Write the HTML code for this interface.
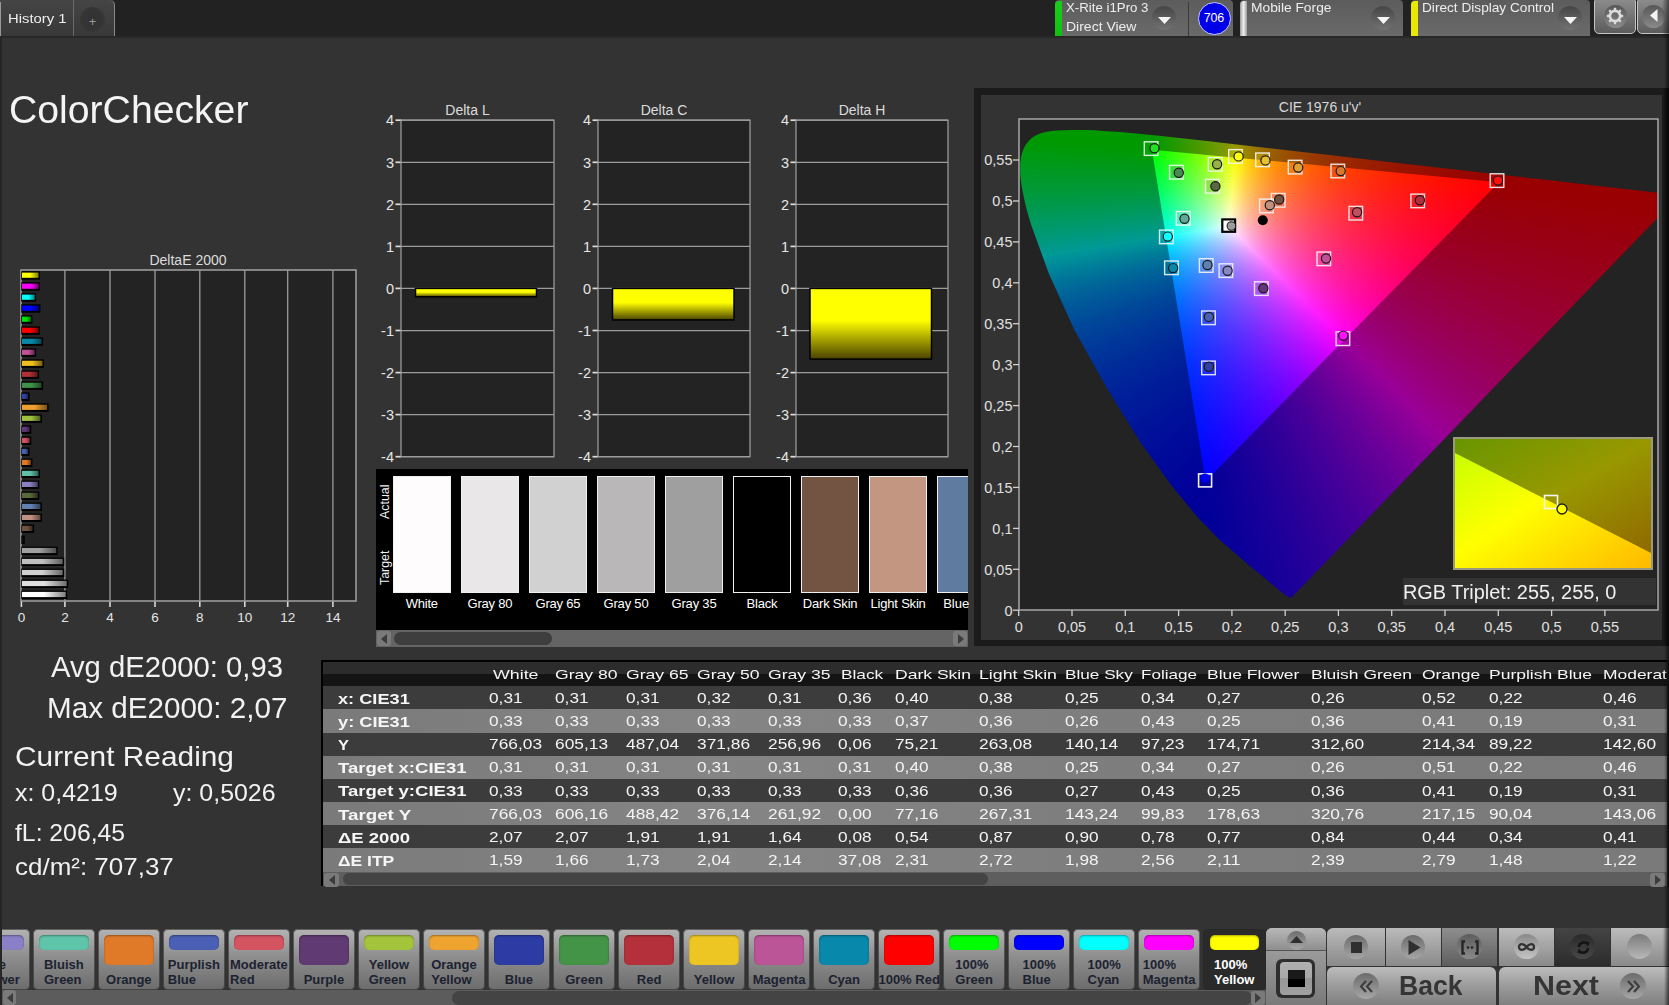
<!DOCTYPE html>
<html><head><meta charset="utf-8"><title>ColorChecker</title>
<style>
*{margin:0;padding:0;box-sizing:border-box}
html,body{width:1669px;height:1005px;overflow:hidden;background:#333333;font-family:"Liberation Sans", sans-serif;color:#ebebeb}
.a{position:absolute}
.t{position:absolute;white-space:nowrap;line-height:1}
</style></head><body>
<div class="a" style="left:0;top:0;width:1669px;height:1005px;background:#333333;overflow:hidden">

<div class="a" style="left:0;top:0;width:1669px;height:37px;background:#222222"></div>
<div class="a" style="left:0;top:36px;width:1669px;height:2px;background:#282828"></div>
<div class="a" style="left:0;top:0;width:115px;height:36px;background:linear-gradient(#454545,#383838);border-radius:0 5px 0 0;border-right:1px solid #8a8a8a"></div>
<div class="a" style="left:0;top:2px;width:1px;height:34px;background:#9a9a9a"></div>
<div class="a" style="left:73px;top:0;width:1px;height:36px;background:#6a6a6a"></div>
<div class="t" style="left:7.80px;top:12.20px;font-size:13.60px;color:#eeeeee;transform:scaleX(1.0922);transform-origin:0 0;">History 1</div>
<div class="a" style="left:80px;top:7px;width:25px;height:25px;border-radius:50%;background:radial-gradient(#333 40%,#3a3a3a)"></div>
<div class="t" style="left:82.5px;top:14.5px;width:20px;text-align:center;font-size:13px;color:#9a9a9a">+</div>
<div class="a" style="left:1055px;top:0;width:178px;height:36px;background:linear-gradient(#5c5c5c,#6a6a6a);border-radius:4px 4px 0 0"></div>
<div class="a" style="left:1055px;top:1px;width:7px;height:35px;background:linear-gradient(#18d018,#10c010);border-radius:4px 0 0 0"></div>
<div class="t" style="left:1065.60px;top:1.96px;font-size:12.60px;color:#eeeeee;transform:scaleX(1.0519);transform-origin:0 0;">X-Rite i1Pro 3</div>
<div class="t" style="left:1065.60px;top:21.16px;font-size:12.60px;color:#eeeeee;transform:scaleX(1.1105);transform-origin:0 0;">Direct View</div>
<div class="a" style="left:1152px;top:6px;width:24px;height:24px;border-radius:50%;background:linear-gradient(#464646,#727272)"></div>
<svg class="a" style="left:1157.5px;top:16.5px" width="13" height="8"><path d="M0 0 L13 0 L6.5 7 Z" fill="#f6f6f6"/></svg>
<div class="a" style="left:1188px;top:2px;width:1px;height:34px;background:#3a3a3a"></div>
<div class="a" style="left:1198px;top:2px;width:33px;height:33px;border-radius:50%;background:#0000e8;border:1.5px solid #c8c8ff"></div>
<div class="t" style="left:1194px;top:12px;width:40px;text-align:center;font-size:12.5px;color:#ffffff;letter-spacing:-0.2px">706</div>
<div class="a" style="left:1240px;top:0;width:163px;height:36px;background:linear-gradient(#5c5c5c,#6a6a6a);border-radius:4px 4px 0 0"></div>
<div class="a" style="left:1240px;top:1px;width:7px;height:35px;background:linear-gradient(90deg,#9a9a9a,#f0f0f0 50%,#9a9a9a);border-radius:4px 0 0 0"></div>
<div class="t" style="left:1250.60px;top:1.96px;font-size:12.60px;color:#eeeeee;transform:scaleX(1.0948);transform-origin:0 0;">Mobile Forge</div>
<div class="a" style="left:1371px;top:6px;width:24px;height:24px;border-radius:50%;background:linear-gradient(#464646,#727272)"></div>
<svg class="a" style="left:1376.5px;top:16.5px" width="13" height="8"><path d="M0 0 L13 0 L6.5 7 Z" fill="#f6f6f6"/></svg>
<div class="a" style="left:1411px;top:0;width:179px;height:36px;background:linear-gradient(#5c5c5c,#6a6a6a);border-radius:4px 4px 0 0"></div>
<div class="a" style="left:1411px;top:1px;width:7px;height:35px;background:#e8e800;border-radius:4px 0 0 0"></div>
<div class="t" style="left:1421.60px;top:1.96px;font-size:12.60px;color:#eeeeee;transform:scaleX(1.0835);transform-origin:0 0;">Direct Display Control</div>
<div class="a" style="left:1558px;top:6px;width:24px;height:24px;border-radius:50%;background:linear-gradient(#464646,#727272)"></div>
<svg class="a" style="left:1563.5px;top:16.5px" width="13" height="8"><path d="M0 0 L13 0 L6.5 7 Z" fill="#f6f6f6"/></svg>
<div class="a" style="left:1594px;top:-3px;width:42px;height:37px;background:linear-gradient(#8e8e8e,#5c5c5c);border:1.2px solid #c4c4c4;border-radius:5px"></div>
<div class="a" style="left:1603.6px;top:5px;width:23.2px;height:23.2px;border-radius:50%;background:linear-gradient(#575757,#8a8a8a)"></div>
<svg class="a" style="left:1605.2px;top:6.2px" width="20" height="20" viewBox="-10 -10 20 20"><g fill="none" stroke="#dcdcdc">
<circle r="5.1" stroke-width="2.6"/></g><g fill="#dcdcdc"><rect x="-1.2" y="-8.2" width="2.4" height="3.6" rx="0.6" transform="rotate(0)"/><rect x="-1.2" y="-8.2" width="2.4" height="3.6" rx="0.6" transform="rotate(45)"/><rect x="-1.2" y="-8.2" width="2.4" height="3.6" rx="0.6" transform="rotate(90)"/><rect x="-1.2" y="-8.2" width="2.4" height="3.6" rx="0.6" transform="rotate(135)"/><rect x="-1.2" y="-8.2" width="2.4" height="3.6" rx="0.6" transform="rotate(180)"/><rect x="-1.2" y="-8.2" width="2.4" height="3.6" rx="0.6" transform="rotate(225)"/><rect x="-1.2" y="-8.2" width="2.4" height="3.6" rx="0.6" transform="rotate(270)"/><rect x="-1.2" y="-8.2" width="2.4" height="3.6" rx="0.6" transform="rotate(315)"/>
</g></svg>
<div class="a" style="left:1637px;top:-3px;width:40px;height:37px;background:linear-gradient(#8e8e8e,#5c5c5c);border:1.2px solid #c4c4c4;border-radius:5px"></div>
<div class="a" style="left:1641.8px;top:5px;width:23.2px;height:23.2px;border-radius:50%;background:linear-gradient(#575757,#8a8a8a)"></div>
<svg class="a" style="left:1649px;top:9px" width="9" height="14"><path d="M8.5 0 L8.5 13 L1 6.5 Z" fill="#f4f4f4"/></svg>
<div class="a" style="left:1662px;top:0;width:7px;height:37px;background:linear-gradient(90deg,rgba(0,0,0,0),rgba(0,0,0,0.5))"></div>
<div class="t" style="left:9.00px;top:91.61px;font-size:37.90px;color:#f4f4f4;transform:scaleX(1.0337);transform-origin:0 0;">ColorChecker</div>
<div class="t" style="left:51.00px;top:652.76px;font-size:29.00px;color:#f2f2f2;transform:scaleX(1.0086);transform-origin:0 0;">Avg dE2000: 0,93</div>
<div class="t" style="left:47.30px;top:693.90px;font-size:28.60px;color:#f2f2f2;transform:scaleX(1.0361);transform-origin:0 0;">Max dE2000: 2,07</div>
<div class="t" style="left:15.00px;top:742.51px;font-size:27.90px;color:#f2f2f2;transform:scaleX(1.0699);transform-origin:0 0;">Current Reading</div>
<div class="t" style="left:15.20px;top:781.16px;font-size:24.00px;color:#f2f2f2;transform:scaleX(1.0402);transform-origin:0 0;">x: 0,4219</div>
<div class="t" style="left:172.60px;top:781.16px;font-size:24.00px;color:#f2f2f2;transform:scaleX(1.0392);transform-origin:0 0;">y: 0,5026</div>
<div class="t" style="left:15.20px;top:821.36px;font-size:24.00px;color:#f2f2f2;transform:scaleX(1.0305);transform-origin:0 0;">fL: 206,45</div>
<div class="t" style="left:15.20px;top:855.26px;font-size:24.00px;color:#f2f2f2;transform:scaleX(1.0823);transform-origin:0 0;">cd/m²: 707,37</div>
<div class="t" style="left:143px;top:252.5px;width:90px;text-align:center;font-size:14px;color:#dcdcdc">DeltaE 2000</div>
<svg class="a" style="left:0;top:0" width="370" height="640"><defs><linearGradient id="bg0" x1="0" y1="0" x2="1" y2="0"><stop offset="0" stop-color="#ffff00"/><stop offset="0.5" stop-color="#ffff00"/><stop offset="1" stop-color="#7f7f00"/></linearGradient><linearGradient id="bg1" x1="0" y1="0" x2="1" y2="0"><stop offset="0" stop-color="#ff00ff"/><stop offset="0.5" stop-color="#ff00ff"/><stop offset="1" stop-color="#7f007f"/></linearGradient><linearGradient id="bg2" x1="0" y1="0" x2="1" y2="0"><stop offset="0" stop-color="#00ffff"/><stop offset="0.5" stop-color="#00ffff"/><stop offset="1" stop-color="#007f7f"/></linearGradient><linearGradient id="bg3" x1="0" y1="0" x2="1" y2="0"><stop offset="0" stop-color="#0000ff"/><stop offset="0.5" stop-color="#0000ff"/><stop offset="1" stop-color="#00007f"/></linearGradient><linearGradient id="bg4" x1="0" y1="0" x2="1" y2="0"><stop offset="0" stop-color="#00e000"/><stop offset="0.5" stop-color="#00e000"/><stop offset="1" stop-color="#007000"/></linearGradient><linearGradient id="bg5" x1="0" y1="0" x2="1" y2="0"><stop offset="0" stop-color="#ff0000"/><stop offset="0.5" stop-color="#ff0000"/><stop offset="1" stop-color="#7f0000"/></linearGradient><linearGradient id="bg6" x1="0" y1="0" x2="1" y2="0"><stop offset="0" stop-color="#0a88a8"/><stop offset="0.5" stop-color="#0a88a8"/><stop offset="1" stop-color="#054454"/></linearGradient><linearGradient id="bg7" x1="0" y1="0" x2="1" y2="0"><stop offset="0" stop-color="#c05098"/><stop offset="0.5" stop-color="#c05098"/><stop offset="1" stop-color="#60284c"/></linearGradient><linearGradient id="bg8" x1="0" y1="0" x2="1" y2="0"><stop offset="0" stop-color="#f0c020"/><stop offset="0.5" stop-color="#f0c020"/><stop offset="1" stop-color="#786010"/></linearGradient><linearGradient id="bg9" x1="0" y1="0" x2="1" y2="0"><stop offset="0" stop-color="#b03038"/><stop offset="0.5" stop-color="#b03038"/><stop offset="1" stop-color="#58181c"/></linearGradient><linearGradient id="bg10" x1="0" y1="0" x2="1" y2="0"><stop offset="0" stop-color="#409048"/><stop offset="0.5" stop-color="#409048"/><stop offset="1" stop-color="#204824"/></linearGradient><linearGradient id="bg11" x1="0" y1="0" x2="1" y2="0"><stop offset="0" stop-color="#3040a0"/><stop offset="0.5" stop-color="#3040a0"/><stop offset="1" stop-color="#182050"/></linearGradient><linearGradient id="bg12" x1="0" y1="0" x2="1" y2="0"><stop offset="0" stop-color="#f0a030"/><stop offset="0.5" stop-color="#f0a030"/><stop offset="1" stop-color="#785018"/></linearGradient><linearGradient id="bg13" x1="0" y1="0" x2="1" y2="0"><stop offset="0" stop-color="#a0c040"/><stop offset="0.5" stop-color="#a0c040"/><stop offset="1" stop-color="#506020"/></linearGradient><linearGradient id="bg14" x1="0" y1="0" x2="1" y2="0"><stop offset="0" stop-color="#603878"/><stop offset="0.5" stop-color="#603878"/><stop offset="1" stop-color="#301c3c"/></linearGradient><linearGradient id="bg15" x1="0" y1="0" x2="1" y2="0"><stop offset="0" stop-color="#d05060"/><stop offset="0.5" stop-color="#d05060"/><stop offset="1" stop-color="#682830"/></linearGradient><linearGradient id="bg16" x1="0" y1="0" x2="1" y2="0"><stop offset="0" stop-color="#4860b0"/><stop offset="0.5" stop-color="#4860b0"/><stop offset="1" stop-color="#243058"/></linearGradient><linearGradient id="bg17" x1="0" y1="0" x2="1" y2="0"><stop offset="0" stop-color="#e07828"/><stop offset="0.5" stop-color="#e07828"/><stop offset="1" stop-color="#703c14"/></linearGradient><linearGradient id="bg18" x1="0" y1="0" x2="1" y2="0"><stop offset="0" stop-color="#60c0a8"/><stop offset="0.5" stop-color="#60c0a8"/><stop offset="1" stop-color="#306054"/></linearGradient><linearGradient id="bg19" x1="0" y1="0" x2="1" y2="0"><stop offset="0" stop-color="#8880c0"/><stop offset="0.5" stop-color="#8880c0"/><stop offset="1" stop-color="#444060"/></linearGradient><linearGradient id="bg20" x1="0" y1="0" x2="1" y2="0"><stop offset="0" stop-color="#586838"/><stop offset="0.5" stop-color="#586838"/><stop offset="1" stop-color="#2c341c"/></linearGradient><linearGradient id="bg21" x1="0" y1="0" x2="1" y2="0"><stop offset="0" stop-color="#6080b0"/><stop offset="0.5" stop-color="#6080b0"/><stop offset="1" stop-color="#304058"/></linearGradient><linearGradient id="bg22" x1="0" y1="0" x2="1" y2="0"><stop offset="0" stop-color="#c09080"/><stop offset="0.5" stop-color="#c09080"/><stop offset="1" stop-color="#604840"/></linearGradient><linearGradient id="bg23" x1="0" y1="0" x2="1" y2="0"><stop offset="0" stop-color="#705040"/><stop offset="0.5" stop-color="#705040"/><stop offset="1" stop-color="#382820"/></linearGradient><linearGradient id="bg24" x1="0" y1="0" x2="1" y2="0"><stop offset="0" stop-color="#101010"/><stop offset="0.5" stop-color="#101010"/><stop offset="1" stop-color="#080808"/></linearGradient><linearGradient id="bg25" x1="0" y1="0" x2="1" y2="0"><stop offset="0" stop-color="#a0a0a0"/><stop offset="0.5" stop-color="#a0a0a0"/><stop offset="1" stop-color="#505050"/></linearGradient><linearGradient id="bg26" x1="0" y1="0" x2="1" y2="0"><stop offset="0" stop-color="#c0c0c0"/><stop offset="0.5" stop-color="#c0c0c0"/><stop offset="1" stop-color="#606060"/></linearGradient><linearGradient id="bg27" x1="0" y1="0" x2="1" y2="0"><stop offset="0" stop-color="#d0d0d0"/><stop offset="0.5" stop-color="#d0d0d0"/><stop offset="1" stop-color="#686868"/></linearGradient><linearGradient id="bg28" x1="0" y1="0" x2="1" y2="0"><stop offset="0" stop-color="#e0e0e0"/><stop offset="0.5" stop-color="#e0e0e0"/><stop offset="1" stop-color="#707070"/></linearGradient><linearGradient id="bg29" x1="0" y1="0" x2="1" y2="0"><stop offset="0" stop-color="#ffffff"/><stop offset="0.5" stop-color="#ffffff"/><stop offset="1" stop-color="#7f7f7f"/></linearGradient></defs><rect x="21" y="270" width="335" height="331" fill="#232323"/><line x1="21.4" y1="601" x2="21.4" y2="607" stroke="#d8d8d8" stroke-width="1.6"/><line x1="64.9" y1="270" x2="64.9" y2="601" stroke="#9c9c9c" stroke-width="1.3"/><line x1="64.9" y1="601" x2="64.9" y2="607" stroke="#d8d8d8" stroke-width="1.6"/><line x1="110.0" y1="270" x2="110.0" y2="601" stroke="#9c9c9c" stroke-width="1.3"/><line x1="110.0" y1="601" x2="110.0" y2="607" stroke="#d8d8d8" stroke-width="1.6"/><line x1="155.0" y1="270" x2="155.0" y2="601" stroke="#9c9c9c" stroke-width="1.3"/><line x1="155.0" y1="601" x2="155.0" y2="607" stroke="#d8d8d8" stroke-width="1.6"/><line x1="199.8" y1="270" x2="199.8" y2="601" stroke="#9c9c9c" stroke-width="1.3"/><line x1="199.8" y1="601" x2="199.8" y2="607" stroke="#d8d8d8" stroke-width="1.6"/><line x1="244.8" y1="270" x2="244.8" y2="601" stroke="#9c9c9c" stroke-width="1.3"/><line x1="244.8" y1="601" x2="244.8" y2="607" stroke="#d8d8d8" stroke-width="1.6"/><line x1="287.7" y1="270" x2="287.7" y2="601" stroke="#9c9c9c" stroke-width="1.3"/><line x1="287.7" y1="601" x2="287.7" y2="607" stroke="#d8d8d8" stroke-width="1.6"/><line x1="332.9" y1="270" x2="332.9" y2="601" stroke="#9c9c9c" stroke-width="1.3"/><line x1="332.9" y1="601" x2="332.9" y2="607" stroke="#d8d8d8" stroke-width="1.6"/><rect x="21" y="270" width="335" height="331" fill="none" stroke="#9c9c9c" stroke-width="1.6"/><rect x="21.3" y="271.3" width="18.7" height="8.4" fill="#000"/><rect x="22.0" y="272.6" width="16.5" height="5.2" fill="url(#bg0)"/><rect x="21.3" y="282.3" width="18.7" height="8.4" fill="#000"/><rect x="22.0" y="283.6" width="16.5" height="5.2" fill="url(#bg1)"/><rect x="21.3" y="293.3" width="14.9" height="8.4" fill="#000"/><rect x="22.0" y="294.6" width="12.7" height="5.2" fill="url(#bg2)"/><rect x="21.3" y="304.3" width="19.1" height="8.4" fill="#000"/><rect x="22.0" y="305.6" width="16.9" height="5.2" fill="url(#bg3)"/><rect x="21.3" y="315.3" width="11.1" height="8.4" fill="#000"/><rect x="22.0" y="316.6" width="8.9" height="5.2" fill="url(#bg4)"/><rect x="21.3" y="326.4" width="18.7" height="8.4" fill="#000"/><rect x="22.0" y="327.7" width="16.5" height="5.2" fill="url(#bg5)"/><rect x="21.3" y="337.4" width="21.8" height="8.4" fill="#000"/><rect x="22.0" y="338.7" width="19.6" height="5.2" fill="url(#bg6)"/><rect x="21.3" y="348.4" width="14.9" height="8.4" fill="#000"/><rect x="22.0" y="349.7" width="12.7" height="5.2" fill="url(#bg7)"/><rect x="21.3" y="359.4" width="22.7" height="8.4" fill="#000"/><rect x="22.0" y="360.7" width="20.5" height="5.2" fill="url(#bg8)"/><rect x="21.3" y="370.4" width="17.8" height="8.4" fill="#000"/><rect x="22.0" y="371.7" width="15.6" height="5.2" fill="url(#bg9)"/><rect x="21.3" y="381.4" width="21.8" height="8.4" fill="#000"/><rect x="22.0" y="382.7" width="19.6" height="5.2" fill="url(#bg10)"/><rect x="21.3" y="392.4" width="8.3" height="8.4" fill="#000"/><rect x="22.0" y="393.7" width="6.1" height="5.2" fill="url(#bg11)"/><rect x="21.3" y="403.4" width="27.3" height="8.4" fill="#000"/><rect x="22.0" y="404.7" width="25.1" height="5.2" fill="url(#bg12)"/><rect x="21.3" y="414.4" width="20.6" height="8.4" fill="#000"/><rect x="22.0" y="415.7" width="18.4" height="5.2" fill="url(#bg13)"/><rect x="21.3" y="425.4" width="10.0" height="8.4" fill="#000"/><rect x="22.0" y="426.7" width="7.8" height="5.2" fill="url(#bg14)"/><rect x="21.3" y="436.4" width="10.0" height="8.4" fill="#000"/><rect x="22.0" y="437.8" width="7.8" height="5.2" fill="url(#bg15)"/><rect x="21.3" y="447.5" width="8.3" height="8.4" fill="#000"/><rect x="22.0" y="448.8" width="6.1" height="5.2" fill="url(#bg16)"/><rect x="21.3" y="458.5" width="11.1" height="8.4" fill="#000"/><rect x="22.0" y="459.8" width="8.9" height="5.2" fill="url(#bg17)"/><rect x="21.3" y="469.5" width="18.7" height="8.4" fill="#000"/><rect x="22.0" y="470.8" width="16.5" height="5.2" fill="url(#bg18)"/><rect x="21.3" y="480.5" width="18.0" height="8.4" fill="#000"/><rect x="22.0" y="481.8" width="15.8" height="5.2" fill="url(#bg19)"/><rect x="21.3" y="491.5" width="18.0" height="8.4" fill="#000"/><rect x="22.0" y="492.8" width="15.8" height="5.2" fill="url(#bg20)"/><rect x="21.3" y="502.5" width="20.6" height="8.4" fill="#000"/><rect x="22.0" y="503.8" width="18.4" height="5.2" fill="url(#bg21)"/><rect x="21.3" y="513.5" width="20.6" height="8.4" fill="#000"/><rect x="22.0" y="514.8" width="18.4" height="5.2" fill="url(#bg22)"/><rect x="21.3" y="524.5" width="12.8" height="8.4" fill="#000"/><rect x="22.0" y="525.8" width="10.6" height="5.2" fill="url(#bg23)"/><rect x="21.3" y="535.5" width="3.5" height="8.4" fill="#000"/><rect x="22.0" y="536.8" width="1.3" height="5.2" fill="url(#bg24)"/><rect x="21.3" y="546.6" width="36.4" height="8.4" fill="#000"/><rect x="22.0" y="547.9" width="34.2" height="5.2" fill="url(#bg25)"/><rect x="21.3" y="557.6" width="42.9" height="8.4" fill="#000"/><rect x="22.0" y="558.9" width="40.7" height="5.2" fill="url(#bg26)"/><rect x="21.3" y="568.6" width="42.9" height="8.4" fill="#000"/><rect x="22.0" y="569.9" width="40.7" height="5.2" fill="url(#bg27)"/><rect x="21.3" y="579.6" width="46.9" height="8.4" fill="#000"/><rect x="22.0" y="580.9" width="44.7" height="5.2" fill="url(#bg28)"/><rect x="21.3" y="590.6" width="45.9" height="8.4" fill="#000"/><rect x="22.0" y="591.9" width="43.7" height="5.2" fill="url(#bg29)"/></svg>
<div class="t" style="left:6.4px;top:610.8px;width:30px;text-align:center;font-size:13.5px;color:#e6e6e6">0</div>
<div class="t" style="left:49.9px;top:610.8px;width:30px;text-align:center;font-size:13.5px;color:#e6e6e6">2</div>
<div class="t" style="left:95.0px;top:610.8px;width:30px;text-align:center;font-size:13.5px;color:#e6e6e6">4</div>
<div class="t" style="left:140.0px;top:610.8px;width:30px;text-align:center;font-size:13.5px;color:#e6e6e6">6</div>
<div class="t" style="left:184.8px;top:610.8px;width:30px;text-align:center;font-size:13.5px;color:#e6e6e6">8</div>
<div class="t" style="left:229.8px;top:610.8px;width:30px;text-align:center;font-size:13.5px;color:#e6e6e6">10</div>
<div class="t" style="left:272.7px;top:610.8px;width:30px;text-align:center;font-size:13.5px;color:#e6e6e6">12</div>
<div class="t" style="left:317.9px;top:610.8px;width:30px;text-align:center;font-size:13.5px;color:#e6e6e6">14</div>
<svg class="a" style="left:381px;top:100px" width="183" height="370"><defs><linearGradient id="yg401" x1="0" y1="0" x2="0" y2="1"><stop offset="0" stop-color="#ffff00"/><stop offset="0.45" stop-color="#ffff00"/><stop offset="1" stop-color="#4a4200"/></linearGradient></defs><rect x="20" y="20.200000000000003" width="153" height="336.5" fill="#232323"/><line x1="20" y1="20.2" x2="173" y2="20.2" stroke="#9c9c9c" stroke-width="1.25"/><line x1="14.5" y1="20.2" x2="20" y2="20.2" stroke="#dcdcdc" stroke-width="1.7"/><line x1="20" y1="62.3" x2="173" y2="62.3" stroke="#9c9c9c" stroke-width="1.25"/><line x1="14.5" y1="62.3" x2="20" y2="62.3" stroke="#dcdcdc" stroke-width="1.7"/><line x1="20" y1="104.3" x2="173" y2="104.3" stroke="#9c9c9c" stroke-width="1.25"/><line x1="14.5" y1="104.3" x2="20" y2="104.3" stroke="#dcdcdc" stroke-width="1.7"/><line x1="20" y1="146.4" x2="173" y2="146.4" stroke="#9c9c9c" stroke-width="1.25"/><line x1="14.5" y1="146.4" x2="20" y2="146.4" stroke="#dcdcdc" stroke-width="1.7"/><line x1="20" y1="188.4" x2="173" y2="188.4" stroke="#9c9c9c" stroke-width="1.25"/><line x1="14.5" y1="188.4" x2="20" y2="188.4" stroke="#dcdcdc" stroke-width="1.7"/><line x1="20" y1="230.5" x2="173" y2="230.5" stroke="#9c9c9c" stroke-width="1.25"/><line x1="14.5" y1="230.5" x2="20" y2="230.5" stroke="#dcdcdc" stroke-width="1.7"/><line x1="20" y1="272.6" x2="173" y2="272.6" stroke="#9c9c9c" stroke-width="1.25"/><line x1="14.5" y1="272.6" x2="20" y2="272.6" stroke="#dcdcdc" stroke-width="1.7"/><line x1="20" y1="314.6" x2="173" y2="314.6" stroke="#9c9c9c" stroke-width="1.25"/><line x1="14.5" y1="314.6" x2="20" y2="314.6" stroke="#dcdcdc" stroke-width="1.7"/><line x1="20" y1="356.7" x2="173" y2="356.7" stroke="#9c9c9c" stroke-width="1.25"/><line x1="14.5" y1="356.7" x2="20" y2="356.7" stroke="#dcdcdc" stroke-width="1.7"/><rect x="20" y="20.200000000000003" width="153" height="336.5" fill="none" stroke="#9c9c9c" stroke-width="1.25"/><rect x="34.5" y="188.4" width="121.0" height="8.4" fill="url(#yg401)" stroke="#000" stroke-width="1.5"/></svg>
<div class="t" style="left:417.5px;top:102.5px;width:100px;text-align:center;font-size:14px;color:#dcdcdc">Delta L</div>
<div class="t" style="left:359px;top:113.4px;width:35px;text-align:right;font-size:14.5px;color:#e6e6e6">4</div>
<div class="t" style="left:359px;top:155.5px;width:35px;text-align:right;font-size:14.5px;color:#e6e6e6">3</div>
<div class="t" style="left:359px;top:197.5px;width:35px;text-align:right;font-size:14.5px;color:#e6e6e6">2</div>
<div class="t" style="left:359px;top:239.6px;width:35px;text-align:right;font-size:14.5px;color:#e6e6e6">1</div>
<div class="t" style="left:359px;top:281.6px;width:35px;text-align:right;font-size:14.5px;color:#e6e6e6">0</div>
<div class="t" style="left:359px;top:323.7px;width:35px;text-align:right;font-size:14.5px;color:#e6e6e6">-1</div>
<div class="t" style="left:359px;top:365.8px;width:35px;text-align:right;font-size:14.5px;color:#e6e6e6">-2</div>
<div class="t" style="left:359px;top:407.8px;width:35px;text-align:right;font-size:14.5px;color:#e6e6e6">-3</div>
<div class="t" style="left:359px;top:449.9px;width:35px;text-align:right;font-size:14.5px;color:#e6e6e6">-4</div>
<svg class="a" style="left:578px;top:100px" width="182" height="370"><defs><linearGradient id="yg598" x1="0" y1="0" x2="0" y2="1"><stop offset="0" stop-color="#ffff00"/><stop offset="0.45" stop-color="#ffff00"/><stop offset="1" stop-color="#4a4200"/></linearGradient></defs><rect x="20" y="20.200000000000003" width="152" height="336.5" fill="#232323"/><line x1="20" y1="20.2" x2="172" y2="20.2" stroke="#9c9c9c" stroke-width="1.25"/><line x1="14.5" y1="20.2" x2="20" y2="20.2" stroke="#dcdcdc" stroke-width="1.7"/><line x1="20" y1="62.3" x2="172" y2="62.3" stroke="#9c9c9c" stroke-width="1.25"/><line x1="14.5" y1="62.3" x2="20" y2="62.3" stroke="#dcdcdc" stroke-width="1.7"/><line x1="20" y1="104.3" x2="172" y2="104.3" stroke="#9c9c9c" stroke-width="1.25"/><line x1="14.5" y1="104.3" x2="20" y2="104.3" stroke="#dcdcdc" stroke-width="1.7"/><line x1="20" y1="146.4" x2="172" y2="146.4" stroke="#9c9c9c" stroke-width="1.25"/><line x1="14.5" y1="146.4" x2="20" y2="146.4" stroke="#dcdcdc" stroke-width="1.7"/><line x1="20" y1="188.4" x2="172" y2="188.4" stroke="#9c9c9c" stroke-width="1.25"/><line x1="14.5" y1="188.4" x2="20" y2="188.4" stroke="#dcdcdc" stroke-width="1.7"/><line x1="20" y1="230.5" x2="172" y2="230.5" stroke="#9c9c9c" stroke-width="1.25"/><line x1="14.5" y1="230.5" x2="20" y2="230.5" stroke="#dcdcdc" stroke-width="1.7"/><line x1="20" y1="272.6" x2="172" y2="272.6" stroke="#9c9c9c" stroke-width="1.25"/><line x1="14.5" y1="272.6" x2="20" y2="272.6" stroke="#dcdcdc" stroke-width="1.7"/><line x1="20" y1="314.6" x2="172" y2="314.6" stroke="#9c9c9c" stroke-width="1.25"/><line x1="14.5" y1="314.6" x2="20" y2="314.6" stroke="#dcdcdc" stroke-width="1.7"/><line x1="20" y1="356.7" x2="172" y2="356.7" stroke="#9c9c9c" stroke-width="1.25"/><line x1="14.5" y1="356.7" x2="20" y2="356.7" stroke="#dcdcdc" stroke-width="1.7"/><rect x="20" y="20.200000000000003" width="152" height="336.5" fill="none" stroke="#9c9c9c" stroke-width="1.25"/><rect x="34.5" y="188.4" width="121.5" height="31.5" fill="url(#yg598)" stroke="#000" stroke-width="1.5"/></svg>
<div class="t" style="left:614.0px;top:102.5px;width:100px;text-align:center;font-size:14px;color:#dcdcdc">Delta C</div>
<div class="t" style="left:556px;top:113.4px;width:35px;text-align:right;font-size:14.5px;color:#e6e6e6">4</div>
<div class="t" style="left:556px;top:155.5px;width:35px;text-align:right;font-size:14.5px;color:#e6e6e6">3</div>
<div class="t" style="left:556px;top:197.5px;width:35px;text-align:right;font-size:14.5px;color:#e6e6e6">2</div>
<div class="t" style="left:556px;top:239.6px;width:35px;text-align:right;font-size:14.5px;color:#e6e6e6">1</div>
<div class="t" style="left:556px;top:281.6px;width:35px;text-align:right;font-size:14.5px;color:#e6e6e6">0</div>
<div class="t" style="left:556px;top:323.7px;width:35px;text-align:right;font-size:14.5px;color:#e6e6e6">-1</div>
<div class="t" style="left:556px;top:365.8px;width:35px;text-align:right;font-size:14.5px;color:#e6e6e6">-2</div>
<div class="t" style="left:556px;top:407.8px;width:35px;text-align:right;font-size:14.5px;color:#e6e6e6">-3</div>
<div class="t" style="left:556px;top:449.9px;width:35px;text-align:right;font-size:14.5px;color:#e6e6e6">-4</div>
<svg class="a" style="left:776px;top:100px" width="182" height="370"><defs><linearGradient id="yg796" x1="0" y1="0" x2="0" y2="1"><stop offset="0" stop-color="#ffff00"/><stop offset="0.45" stop-color="#ffff00"/><stop offset="1" stop-color="#4a4200"/></linearGradient></defs><rect x="20" y="20.200000000000003" width="152" height="336.5" fill="#232323"/><line x1="20" y1="20.2" x2="172" y2="20.2" stroke="#9c9c9c" stroke-width="1.25"/><line x1="14.5" y1="20.2" x2="20" y2="20.2" stroke="#dcdcdc" stroke-width="1.7"/><line x1="20" y1="62.3" x2="172" y2="62.3" stroke="#9c9c9c" stroke-width="1.25"/><line x1="14.5" y1="62.3" x2="20" y2="62.3" stroke="#dcdcdc" stroke-width="1.7"/><line x1="20" y1="104.3" x2="172" y2="104.3" stroke="#9c9c9c" stroke-width="1.25"/><line x1="14.5" y1="104.3" x2="20" y2="104.3" stroke="#dcdcdc" stroke-width="1.7"/><line x1="20" y1="146.4" x2="172" y2="146.4" stroke="#9c9c9c" stroke-width="1.25"/><line x1="14.5" y1="146.4" x2="20" y2="146.4" stroke="#dcdcdc" stroke-width="1.7"/><line x1="20" y1="188.4" x2="172" y2="188.4" stroke="#9c9c9c" stroke-width="1.25"/><line x1="14.5" y1="188.4" x2="20" y2="188.4" stroke="#dcdcdc" stroke-width="1.7"/><line x1="20" y1="230.5" x2="172" y2="230.5" stroke="#9c9c9c" stroke-width="1.25"/><line x1="14.5" y1="230.5" x2="20" y2="230.5" stroke="#dcdcdc" stroke-width="1.7"/><line x1="20" y1="272.6" x2="172" y2="272.6" stroke="#9c9c9c" stroke-width="1.25"/><line x1="14.5" y1="272.6" x2="20" y2="272.6" stroke="#dcdcdc" stroke-width="1.7"/><line x1="20" y1="314.6" x2="172" y2="314.6" stroke="#9c9c9c" stroke-width="1.25"/><line x1="14.5" y1="314.6" x2="20" y2="314.6" stroke="#dcdcdc" stroke-width="1.7"/><line x1="20" y1="356.7" x2="172" y2="356.7" stroke="#9c9c9c" stroke-width="1.25"/><line x1="14.5" y1="356.7" x2="20" y2="356.7" stroke="#dcdcdc" stroke-width="1.7"/><rect x="20" y="20.200000000000003" width="152" height="336.5" fill="none" stroke="#9c9c9c" stroke-width="1.25"/><rect x="34" y="188.4" width="121.5" height="70.7" fill="url(#yg796)" stroke="#000" stroke-width="1.5"/></svg>
<div class="t" style="left:812.0px;top:102.5px;width:100px;text-align:center;font-size:14px;color:#dcdcdc">Delta H</div>
<div class="t" style="left:754px;top:113.4px;width:35px;text-align:right;font-size:14.5px;color:#e6e6e6">4</div>
<div class="t" style="left:754px;top:155.5px;width:35px;text-align:right;font-size:14.5px;color:#e6e6e6">3</div>
<div class="t" style="left:754px;top:197.5px;width:35px;text-align:right;font-size:14.5px;color:#e6e6e6">2</div>
<div class="t" style="left:754px;top:239.6px;width:35px;text-align:right;font-size:14.5px;color:#e6e6e6">1</div>
<div class="t" style="left:754px;top:281.6px;width:35px;text-align:right;font-size:14.5px;color:#e6e6e6">0</div>
<div class="t" style="left:754px;top:323.7px;width:35px;text-align:right;font-size:14.5px;color:#e6e6e6">-1</div>
<div class="t" style="left:754px;top:365.8px;width:35px;text-align:right;font-size:14.5px;color:#e6e6e6">-2</div>
<div class="t" style="left:754px;top:407.8px;width:35px;text-align:right;font-size:14.5px;color:#e6e6e6">-3</div>
<div class="t" style="left:754px;top:449.9px;width:35px;text-align:right;font-size:14.5px;color:#e6e6e6">-4</div>
<div class="a" style="left:376px;top:469px;width:592px;height:162px;background:#000"></div>
<div class="a" style="left:392.8px;top:476px;width:58.0px;height:117px;background:#fefcfd;border:1.5px solid #f0f0f0;"></div>
<div class="t" style="left:382.8px;top:597px;width:78px;text-align:center;font-size:13px;letter-spacing:-0.2px;color:#ffffff">White</div>
<div class="a" style="left:460.9px;top:476px;width:58.0px;height:117px;background:#e9e7e8;border:1.5px solid #f0f0f0;"></div>
<div class="t" style="left:450.9px;top:597px;width:78px;text-align:center;font-size:13px;letter-spacing:-0.2px;color:#ffffff">Gray 80</div>
<div class="a" style="left:528.9px;top:476px;width:58.0px;height:117px;background:#d2d1d2;border:1.5px solid #f0f0f0;"></div>
<div class="t" style="left:518.9px;top:597px;width:78px;text-align:center;font-size:13px;letter-spacing:-0.2px;color:#ffffff">Gray 65</div>
<div class="a" style="left:597.0px;top:476px;width:58.0px;height:117px;background:#bab7b8;border:1.5px solid #f0f0f0;"></div>
<div class="t" style="left:587.0px;top:597px;width:78px;text-align:center;font-size:13px;letter-spacing:-0.2px;color:#ffffff">Gray 50</div>
<div class="a" style="left:665.0px;top:476px;width:58.0px;height:117px;background:#a09fa0;border:1.5px solid #f0f0f0;"></div>
<div class="t" style="left:655.0px;top:597px;width:78px;text-align:center;font-size:13px;letter-spacing:-0.2px;color:#ffffff">Gray 35</div>
<div class="a" style="left:733.0px;top:476px;width:58.0px;height:117px;background:#000000;border:1.5px solid #f0f0f0;"></div>
<div class="t" style="left:723.0px;top:597px;width:78px;text-align:center;font-size:13px;letter-spacing:-0.2px;color:#ffffff">Black</div>
<div class="a" style="left:801.1px;top:476px;width:58.0px;height:117px;background:#735443;border:1.5px solid #f0f0f0;"></div>
<div class="t" style="left:791.1px;top:597px;width:78px;text-align:center;font-size:13px;letter-spacing:-0.2px;color:#ffffff">Dark Skin</div>
<div class="a" style="left:869.1px;top:476px;width:58.0px;height:117px;background:#c39682;border:1.5px solid #f0f0f0;"></div>
<div class="t" style="left:859.1px;top:597px;width:78px;text-align:center;font-size:13px;letter-spacing:-0.2px;color:#ffffff">Light Skin</div>
<div class="a" style="left:937.2px;top:476px;width:30.8px;height:117px;background:#5f7ba0;border-left:1.5px solid #f0f0f0;border-top:1.5px solid #f0f0f0;border-bottom:1.5px solid #f0f0f0;"></div>
<div class="t" style="left:943.2px;top:597px;font-size:13px;color:#ffffff">Blue</div>
<div class="t" style="left:379px;top:519.3px;font-size:12.4px;color:#f0f0f0;transform:rotate(-90deg);transform-origin:0 0;width:40px;height:14px">Actual</div>
<div class="t" style="left:379px;top:585px;font-size:12.4px;color:#f0f0f0;transform:rotate(-90deg);transform-origin:0 0;width:40px;height:14px">Target</div>
<div class="a" style="left:376px;top:630px;width:592px;height:17px;background:#646464"></div>
<div class="a" style="left:394px;top:632px;width:158px;height:13px;border-radius:7px;background:#3e3e3e"></div>
<div class="a" style="left:377px;top:631px;width:14px;height:15px;border-radius:3px;background:#7a7a7a"></div>
<svg class="a" style="left:380px;top:634px" width="8" height="10"><path d="M7 0 L7 10 L1 5 Z" fill="#3c3c3c"/></svg>
<div class="a" style="left:953px;top:631px;width:14px;height:15px;border-radius:3px;background:#7a7a7a"></div>
<svg class="a" style="left:957px;top:634px" width="8" height="10"><path d="M1 0 L1 10 L7 5 Z" fill="#3c3c3c"/></svg>
<div class="a" style="left:321px;top:660px;width:1348px;height:225.5px;background:#000"></div>
<div class="a" style="left:323px;top:662px;width:1346px;height:12px;background:#2c2c2c"></div>
<div class="a" style="left:323px;top:674px;width:1346px;height:12px;background:#141414"></div>
<div class="a" style="left:323px;top:686.20px;width:1346px;height:23.38px;background:#3c3c3c"></div>
<div class="a" style="left:323px;top:709.38px;width:1346px;height:23.38px;background:linear-gradient(90deg,#7a7a7a,#858585 30%,#7d7d7d 60%,#7a7a7a)"></div>
<div class="a" style="left:323px;top:732.56px;width:1346px;height:23.38px;background:#3c3c3c"></div>
<div class="a" style="left:323px;top:755.74px;width:1346px;height:23.38px;background:linear-gradient(90deg,#7a7a7a,#858585 30%,#7d7d7d 60%,#7a7a7a)"></div>
<div class="a" style="left:323px;top:778.92px;width:1346px;height:23.38px;background:#3c3c3c"></div>
<div class="a" style="left:323px;top:802.10px;width:1346px;height:23.38px;background:linear-gradient(90deg,#7a7a7a,#858585 30%,#7d7d7d 60%,#7a7a7a)"></div>
<div class="a" style="left:323px;top:825.28px;width:1346px;height:23.38px;background:#3c3c3c"></div>
<div class="a" style="left:323px;top:848.46px;width:1346px;height:23.38px;background:linear-gradient(90deg,#7a7a7a,#858585 30%,#7d7d7d 60%,#7a7a7a)"></div>
<div class="a" style="left:0;top:0;width:1667px;height:1005px;overflow:hidden"><div class="t" style="left:493.00px;top:669.01px;font-size:12.20px;color:#f6f6f6;transform:scaleX(1.4598);transform-origin:0 0;">White</div><div class="t" style="left:555.00px;top:669.01px;font-size:12.20px;color:#f6f6f6;transform:scaleX(1.4448);transform-origin:0 0;">Gray 80</div><div class="t" style="left:625.90px;top:669.01px;font-size:12.20px;color:#f6f6f6;transform:scaleX(1.4448);transform-origin:0 0;">Gray 65</div><div class="t" style="left:696.80px;top:669.01px;font-size:12.20px;color:#f6f6f6;transform:scaleX(1.4448);transform-origin:0 0;">Gray 50</div><div class="t" style="left:767.70px;top:669.01px;font-size:12.20px;color:#f6f6f6;transform:scaleX(1.4448);transform-origin:0 0;">Gray 35</div><div class="t" style="left:841.10px;top:669.01px;font-size:12.20px;color:#f6f6f6;transform:scaleX(1.4176);transform-origin:0 0;">Black</div><div class="t" style="left:894.90px;top:669.01px;font-size:12.20px;color:#f6f6f6;transform:scaleX(1.4384);transform-origin:0 0;">Dark Skin</div><div class="t" style="left:978.80px;top:669.01px;font-size:12.20px;color:#f6f6f6;transform:scaleX(1.4563);transform-origin:0 0;">Light Skin</div><div class="t" style="left:1064.80px;top:669.01px;font-size:12.20px;color:#f6f6f6;transform:scaleX(1.4086);transform-origin:0 0;">Blue Sky</div><div class="t" style="left:1140.80px;top:669.01px;font-size:12.20px;color:#f6f6f6;transform:scaleX(1.4026);transform-origin:0 0;">Foliage</div><div class="t" style="left:1207.20px;top:669.01px;font-size:12.20px;color:#f6f6f6;transform:scaleX(1.4351);transform-origin:0 0;">Blue Flower</div><div class="t" style="left:1310.90px;top:669.01px;font-size:12.20px;color:#f6f6f6;transform:scaleX(1.4325);transform-origin:0 0;">Bluish Green</div><div class="t" style="left:1421.50px;top:669.01px;font-size:12.20px;color:#f6f6f6;transform:scaleX(1.4284);transform-origin:0 0;">Orange</div><div class="t" style="left:1489.10px;top:669.01px;font-size:12.20px;color:#f6f6f6;transform:scaleX(1.4343);transform-origin:0 0;">Purplish Blue</div><div class="t" style="left:1603.00px;top:669.01px;font-size:12.20px;color:#f6f6f6;transform:scaleX(1.4305);transform-origin:0 0;">Moderate Red</div><div class="t" style="left:337.50px;top:690.60px;font-size:15.00px;color:#f6f6f6;font-weight:bold;transform:scaleX(1.2124);transform-origin:0 0;">x: CIE31</div><div class="t" style="left:488.70px;top:690.94px;font-size:14.60px;color:#f4f4f4;transform:scaleX(1.1814);transform-origin:0 0;">0,31</div><div class="t" style="left:555.20px;top:690.94px;font-size:14.60px;color:#f4f4f4;transform:scaleX(1.1814);transform-origin:0 0;">0,31</div><div class="t" style="left:626.10px;top:690.94px;font-size:14.60px;color:#f4f4f4;transform:scaleX(1.1814);transform-origin:0 0;">0,31</div><div class="t" style="left:697.00px;top:690.94px;font-size:14.60px;color:#f4f4f4;transform:scaleX(1.1814);transform-origin:0 0;">0,32</div><div class="t" style="left:767.90px;top:690.94px;font-size:14.60px;color:#f4f4f4;transform:scaleX(1.1814);transform-origin:0 0;">0,31</div><div class="t" style="left:838.40px;top:690.94px;font-size:14.60px;color:#f4f4f4;transform:scaleX(1.1814);transform-origin:0 0;">0,36</div><div class="t" style="left:895.10px;top:690.94px;font-size:14.60px;color:#f4f4f4;transform:scaleX(1.1814);transform-origin:0 0;">0,40</div><div class="t" style="left:979.00px;top:690.94px;font-size:14.60px;color:#f4f4f4;transform:scaleX(1.1814);transform-origin:0 0;">0,38</div><div class="t" style="left:1065.00px;top:690.94px;font-size:14.60px;color:#f4f4f4;transform:scaleX(1.1814);transform-origin:0 0;">0,25</div><div class="t" style="left:1141.00px;top:690.94px;font-size:14.60px;color:#f4f4f4;transform:scaleX(1.1814);transform-origin:0 0;">0,34</div><div class="t" style="left:1207.40px;top:690.94px;font-size:14.60px;color:#f4f4f4;transform:scaleX(1.1814);transform-origin:0 0;">0,27</div><div class="t" style="left:1311.10px;top:690.94px;font-size:14.60px;color:#f4f4f4;transform:scaleX(1.1814);transform-origin:0 0;">0,26</div><div class="t" style="left:1421.70px;top:690.94px;font-size:14.60px;color:#f4f4f4;transform:scaleX(1.1814);transform-origin:0 0;">0,52</div><div class="t" style="left:1489.30px;top:690.94px;font-size:14.60px;color:#f4f4f4;transform:scaleX(1.1814);transform-origin:0 0;">0,22</div><div class="t" style="left:1603.20px;top:690.94px;font-size:14.60px;color:#f4f4f4;transform:scaleX(1.1814);transform-origin:0 0;">0,46</div><div class="t" style="left:337.50px;top:713.78px;font-size:15.00px;color:#f6f6f6;font-weight:bold;transform:scaleX(1.2142);transform-origin:0 0;">y: CIE31</div><div class="t" style="left:488.70px;top:714.12px;font-size:14.60px;color:#f4f4f4;transform:scaleX(1.1814);transform-origin:0 0;">0,33</div><div class="t" style="left:555.20px;top:714.12px;font-size:14.60px;color:#f4f4f4;transform:scaleX(1.1814);transform-origin:0 0;">0,33</div><div class="t" style="left:626.10px;top:714.12px;font-size:14.60px;color:#f4f4f4;transform:scaleX(1.1814);transform-origin:0 0;">0,33</div><div class="t" style="left:697.00px;top:714.12px;font-size:14.60px;color:#f4f4f4;transform:scaleX(1.1814);transform-origin:0 0;">0,33</div><div class="t" style="left:767.90px;top:714.12px;font-size:14.60px;color:#f4f4f4;transform:scaleX(1.1814);transform-origin:0 0;">0,33</div><div class="t" style="left:838.40px;top:714.12px;font-size:14.60px;color:#f4f4f4;transform:scaleX(1.1814);transform-origin:0 0;">0,33</div><div class="t" style="left:895.10px;top:714.12px;font-size:14.60px;color:#f4f4f4;transform:scaleX(1.1814);transform-origin:0 0;">0,37</div><div class="t" style="left:979.00px;top:714.12px;font-size:14.60px;color:#f4f4f4;transform:scaleX(1.1814);transform-origin:0 0;">0,36</div><div class="t" style="left:1065.00px;top:714.12px;font-size:14.60px;color:#f4f4f4;transform:scaleX(1.1814);transform-origin:0 0;">0,26</div><div class="t" style="left:1141.00px;top:714.12px;font-size:14.60px;color:#f4f4f4;transform:scaleX(1.1814);transform-origin:0 0;">0,43</div><div class="t" style="left:1207.40px;top:714.12px;font-size:14.60px;color:#f4f4f4;transform:scaleX(1.1814);transform-origin:0 0;">0,25</div><div class="t" style="left:1311.10px;top:714.12px;font-size:14.60px;color:#f4f4f4;transform:scaleX(1.1814);transform-origin:0 0;">0,36</div><div class="t" style="left:1421.70px;top:714.12px;font-size:14.60px;color:#f4f4f4;transform:scaleX(1.1814);transform-origin:0 0;">0,41</div><div class="t" style="left:1489.30px;top:714.12px;font-size:14.60px;color:#f4f4f4;transform:scaleX(1.1814);transform-origin:0 0;">0,19</div><div class="t" style="left:1603.20px;top:714.12px;font-size:14.60px;color:#f4f4f4;transform:scaleX(1.1814);transform-origin:0 0;">0,31</div><div class="t" style="left:337.50px;top:736.96px;font-size:15.00px;color:#f6f6f6;font-weight:bold;transform:scaleX(1.0934);transform-origin:0 0;">Y</div><div class="t" style="left:488.70px;top:737.30px;font-size:14.60px;color:#f4f4f4;transform:scaleX(1.1878);transform-origin:0 0;">766,03</div><div class="t" style="left:555.20px;top:737.30px;font-size:14.60px;color:#f4f4f4;transform:scaleX(1.1878);transform-origin:0 0;">605,13</div><div class="t" style="left:626.10px;top:737.30px;font-size:14.60px;color:#f4f4f4;transform:scaleX(1.1878);transform-origin:0 0;">487,04</div><div class="t" style="left:697.00px;top:737.30px;font-size:14.60px;color:#f4f4f4;transform:scaleX(1.1878);transform-origin:0 0;">371,86</div><div class="t" style="left:767.90px;top:737.30px;font-size:14.60px;color:#f4f4f4;transform:scaleX(1.1878);transform-origin:0 0;">256,96</div><div class="t" style="left:838.40px;top:737.30px;font-size:14.60px;color:#f4f4f4;transform:scaleX(1.1814);transform-origin:0 0;">0,06</div><div class="t" style="left:895.10px;top:737.30px;font-size:14.60px;color:#f4f4f4;transform:scaleX(1.1853);transform-origin:0 0;">75,21</div><div class="t" style="left:979.00px;top:737.30px;font-size:14.60px;color:#f4f4f4;transform:scaleX(1.1878);transform-origin:0 0;">263,08</div><div class="t" style="left:1065.00px;top:737.30px;font-size:14.60px;color:#f4f4f4;transform:scaleX(1.1878);transform-origin:0 0;">140,14</div><div class="t" style="left:1141.00px;top:737.30px;font-size:14.60px;color:#f4f4f4;transform:scaleX(1.1853);transform-origin:0 0;">97,23</div><div class="t" style="left:1207.40px;top:737.30px;font-size:14.60px;color:#f4f4f4;transform:scaleX(1.1878);transform-origin:0 0;">174,71</div><div class="t" style="left:1311.10px;top:737.30px;font-size:14.60px;color:#f4f4f4;transform:scaleX(1.1878);transform-origin:0 0;">312,60</div><div class="t" style="left:1421.70px;top:737.30px;font-size:14.60px;color:#f4f4f4;transform:scaleX(1.1878);transform-origin:0 0;">214,34</div><div class="t" style="left:1489.30px;top:737.30px;font-size:14.60px;color:#f4f4f4;transform:scaleX(1.1853);transform-origin:0 0;">89,22</div><div class="t" style="left:1603.20px;top:737.30px;font-size:14.60px;color:#f4f4f4;transform:scaleX(1.1878);transform-origin:0 0;">142,60</div><div class="t" style="left:337.50px;top:760.14px;font-size:15.00px;color:#f6f6f6;font-weight:bold;transform:scaleX(1.2369);transform-origin:0 0;">Target x:CIE31</div><div class="t" style="left:488.70px;top:760.48px;font-size:14.60px;color:#f4f4f4;transform:scaleX(1.1814);transform-origin:0 0;">0,31</div><div class="t" style="left:555.20px;top:760.48px;font-size:14.60px;color:#f4f4f4;transform:scaleX(1.1814);transform-origin:0 0;">0,31</div><div class="t" style="left:626.10px;top:760.48px;font-size:14.60px;color:#f4f4f4;transform:scaleX(1.1814);transform-origin:0 0;">0,31</div><div class="t" style="left:697.00px;top:760.48px;font-size:14.60px;color:#f4f4f4;transform:scaleX(1.1814);transform-origin:0 0;">0,31</div><div class="t" style="left:767.90px;top:760.48px;font-size:14.60px;color:#f4f4f4;transform:scaleX(1.1814);transform-origin:0 0;">0,31</div><div class="t" style="left:838.40px;top:760.48px;font-size:14.60px;color:#f4f4f4;transform:scaleX(1.1814);transform-origin:0 0;">0,31</div><div class="t" style="left:895.10px;top:760.48px;font-size:14.60px;color:#f4f4f4;transform:scaleX(1.1814);transform-origin:0 0;">0,40</div><div class="t" style="left:979.00px;top:760.48px;font-size:14.60px;color:#f4f4f4;transform:scaleX(1.1814);transform-origin:0 0;">0,38</div><div class="t" style="left:1065.00px;top:760.48px;font-size:14.60px;color:#f4f4f4;transform:scaleX(1.1814);transform-origin:0 0;">0,25</div><div class="t" style="left:1141.00px;top:760.48px;font-size:14.60px;color:#f4f4f4;transform:scaleX(1.1814);transform-origin:0 0;">0,34</div><div class="t" style="left:1207.40px;top:760.48px;font-size:14.60px;color:#f4f4f4;transform:scaleX(1.1814);transform-origin:0 0;">0,27</div><div class="t" style="left:1311.10px;top:760.48px;font-size:14.60px;color:#f4f4f4;transform:scaleX(1.1814);transform-origin:0 0;">0,26</div><div class="t" style="left:1421.70px;top:760.48px;font-size:14.60px;color:#f4f4f4;transform:scaleX(1.1814);transform-origin:0 0;">0,51</div><div class="t" style="left:1489.30px;top:760.48px;font-size:14.60px;color:#f4f4f4;transform:scaleX(1.1814);transform-origin:0 0;">0,22</div><div class="t" style="left:1603.20px;top:760.48px;font-size:14.60px;color:#f4f4f4;transform:scaleX(1.1814);transform-origin:0 0;">0,46</div><div class="t" style="left:337.50px;top:783.32px;font-size:15.00px;color:#f6f6f6;font-weight:bold;transform:scaleX(1.2380);transform-origin:0 0;">Target y:CIE31</div><div class="t" style="left:488.70px;top:783.66px;font-size:14.60px;color:#f4f4f4;transform:scaleX(1.1814);transform-origin:0 0;">0,33</div><div class="t" style="left:555.20px;top:783.66px;font-size:14.60px;color:#f4f4f4;transform:scaleX(1.1814);transform-origin:0 0;">0,33</div><div class="t" style="left:626.10px;top:783.66px;font-size:14.60px;color:#f4f4f4;transform:scaleX(1.1814);transform-origin:0 0;">0,33</div><div class="t" style="left:697.00px;top:783.66px;font-size:14.60px;color:#f4f4f4;transform:scaleX(1.1814);transform-origin:0 0;">0,33</div><div class="t" style="left:767.90px;top:783.66px;font-size:14.60px;color:#f4f4f4;transform:scaleX(1.1814);transform-origin:0 0;">0,33</div><div class="t" style="left:838.40px;top:783.66px;font-size:14.60px;color:#f4f4f4;transform:scaleX(1.1814);transform-origin:0 0;">0,33</div><div class="t" style="left:895.10px;top:783.66px;font-size:14.60px;color:#f4f4f4;transform:scaleX(1.1814);transform-origin:0 0;">0,36</div><div class="t" style="left:979.00px;top:783.66px;font-size:14.60px;color:#f4f4f4;transform:scaleX(1.1814);transform-origin:0 0;">0,36</div><div class="t" style="left:1065.00px;top:783.66px;font-size:14.60px;color:#f4f4f4;transform:scaleX(1.1814);transform-origin:0 0;">0,27</div><div class="t" style="left:1141.00px;top:783.66px;font-size:14.60px;color:#f4f4f4;transform:scaleX(1.1814);transform-origin:0 0;">0,43</div><div class="t" style="left:1207.40px;top:783.66px;font-size:14.60px;color:#f4f4f4;transform:scaleX(1.1814);transform-origin:0 0;">0,25</div><div class="t" style="left:1311.10px;top:783.66px;font-size:14.60px;color:#f4f4f4;transform:scaleX(1.1814);transform-origin:0 0;">0,36</div><div class="t" style="left:1421.70px;top:783.66px;font-size:14.60px;color:#f4f4f4;transform:scaleX(1.1814);transform-origin:0 0;">0,41</div><div class="t" style="left:1489.30px;top:783.66px;font-size:14.60px;color:#f4f4f4;transform:scaleX(1.1814);transform-origin:0 0;">0,19</div><div class="t" style="left:1603.20px;top:783.66px;font-size:14.60px;color:#f4f4f4;transform:scaleX(1.1814);transform-origin:0 0;">0,31</div><div class="t" style="left:337.50px;top:806.50px;font-size:15.00px;color:#f6f6f6;font-weight:bold;transform:scaleX(1.2488);transform-origin:0 0;">Target Y</div><div class="t" style="left:488.70px;top:806.84px;font-size:14.60px;color:#f4f4f4;transform:scaleX(1.1878);transform-origin:0 0;">766,03</div><div class="t" style="left:555.20px;top:806.84px;font-size:14.60px;color:#f4f4f4;transform:scaleX(1.1878);transform-origin:0 0;">606,16</div><div class="t" style="left:626.10px;top:806.84px;font-size:14.60px;color:#f4f4f4;transform:scaleX(1.1878);transform-origin:0 0;">488,42</div><div class="t" style="left:697.00px;top:806.84px;font-size:14.60px;color:#f4f4f4;transform:scaleX(1.1878);transform-origin:0 0;">376,14</div><div class="t" style="left:767.90px;top:806.84px;font-size:14.60px;color:#f4f4f4;transform:scaleX(1.1878);transform-origin:0 0;">261,92</div><div class="t" style="left:838.40px;top:806.84px;font-size:14.60px;color:#f4f4f4;transform:scaleX(1.1814);transform-origin:0 0;">0,00</div><div class="t" style="left:895.10px;top:806.84px;font-size:14.60px;color:#f4f4f4;transform:scaleX(1.1853);transform-origin:0 0;">77,16</div><div class="t" style="left:979.00px;top:806.84px;font-size:14.60px;color:#f4f4f4;transform:scaleX(1.1878);transform-origin:0 0;">267,31</div><div class="t" style="left:1065.00px;top:806.84px;font-size:14.60px;color:#f4f4f4;transform:scaleX(1.1878);transform-origin:0 0;">143,24</div><div class="t" style="left:1141.00px;top:806.84px;font-size:14.60px;color:#f4f4f4;transform:scaleX(1.1853);transform-origin:0 0;">99,83</div><div class="t" style="left:1207.40px;top:806.84px;font-size:14.60px;color:#f4f4f4;transform:scaleX(1.1878);transform-origin:0 0;">178,63</div><div class="t" style="left:1311.10px;top:806.84px;font-size:14.60px;color:#f4f4f4;transform:scaleX(1.1878);transform-origin:0 0;">320,76</div><div class="t" style="left:1421.70px;top:806.84px;font-size:14.60px;color:#f4f4f4;transform:scaleX(1.1878);transform-origin:0 0;">217,15</div><div class="t" style="left:1489.30px;top:806.84px;font-size:14.60px;color:#f4f4f4;transform:scaleX(1.1853);transform-origin:0 0;">90,04</div><div class="t" style="left:1603.20px;top:806.84px;font-size:14.60px;color:#f4f4f4;transform:scaleX(1.1878);transform-origin:0 0;">143,06</div><div class="t" style="left:337.50px;top:829.68px;font-size:15.00px;color:#f6f6f6;font-weight:bold;transform:scaleX(1.2345);transform-origin:0 0;">ΔE 2000</div><div class="t" style="left:488.70px;top:830.02px;font-size:14.60px;color:#f4f4f4;transform:scaleX(1.1814);transform-origin:0 0;">2,07</div><div class="t" style="left:555.20px;top:830.02px;font-size:14.60px;color:#f4f4f4;transform:scaleX(1.1814);transform-origin:0 0;">2,07</div><div class="t" style="left:626.10px;top:830.02px;font-size:14.60px;color:#f4f4f4;transform:scaleX(1.1814);transform-origin:0 0;">1,91</div><div class="t" style="left:697.00px;top:830.02px;font-size:14.60px;color:#f4f4f4;transform:scaleX(1.1814);transform-origin:0 0;">1,91</div><div class="t" style="left:767.90px;top:830.02px;font-size:14.60px;color:#f4f4f4;transform:scaleX(1.1814);transform-origin:0 0;">1,64</div><div class="t" style="left:838.40px;top:830.02px;font-size:14.60px;color:#f4f4f4;transform:scaleX(1.1814);transform-origin:0 0;">0,08</div><div class="t" style="left:895.10px;top:830.02px;font-size:14.60px;color:#f4f4f4;transform:scaleX(1.1814);transform-origin:0 0;">0,54</div><div class="t" style="left:979.00px;top:830.02px;font-size:14.60px;color:#f4f4f4;transform:scaleX(1.1814);transform-origin:0 0;">0,87</div><div class="t" style="left:1065.00px;top:830.02px;font-size:14.60px;color:#f4f4f4;transform:scaleX(1.1814);transform-origin:0 0;">0,90</div><div class="t" style="left:1141.00px;top:830.02px;font-size:14.60px;color:#f4f4f4;transform:scaleX(1.1814);transform-origin:0 0;">0,78</div><div class="t" style="left:1207.40px;top:830.02px;font-size:14.60px;color:#f4f4f4;transform:scaleX(1.1814);transform-origin:0 0;">0,77</div><div class="t" style="left:1311.10px;top:830.02px;font-size:14.60px;color:#f4f4f4;transform:scaleX(1.1814);transform-origin:0 0;">0,84</div><div class="t" style="left:1421.70px;top:830.02px;font-size:14.60px;color:#f4f4f4;transform:scaleX(1.1814);transform-origin:0 0;">0,44</div><div class="t" style="left:1489.30px;top:830.02px;font-size:14.60px;color:#f4f4f4;transform:scaleX(1.1814);transform-origin:0 0;">0,34</div><div class="t" style="left:1603.20px;top:830.02px;font-size:14.60px;color:#f4f4f4;transform:scaleX(1.1814);transform-origin:0 0;">0,41</div><div class="t" style="left:337.50px;top:852.86px;font-size:15.00px;color:#f6f6f6;font-weight:bold;transform:scaleX(1.1651);transform-origin:0 0;">ΔE ITP</div><div class="t" style="left:488.70px;top:853.20px;font-size:14.60px;color:#f4f4f4;transform:scaleX(1.1814);transform-origin:0 0;">1,59</div><div class="t" style="left:555.20px;top:853.20px;font-size:14.60px;color:#f4f4f4;transform:scaleX(1.1814);transform-origin:0 0;">1,66</div><div class="t" style="left:626.10px;top:853.20px;font-size:14.60px;color:#f4f4f4;transform:scaleX(1.1814);transform-origin:0 0;">1,73</div><div class="t" style="left:697.00px;top:853.20px;font-size:14.60px;color:#f4f4f4;transform:scaleX(1.1814);transform-origin:0 0;">2,04</div><div class="t" style="left:767.90px;top:853.20px;font-size:14.60px;color:#f4f4f4;transform:scaleX(1.1814);transform-origin:0 0;">2,14</div><div class="t" style="left:838.40px;top:853.20px;font-size:14.60px;color:#f4f4f4;transform:scaleX(1.1853);transform-origin:0 0;">37,08</div><div class="t" style="left:895.10px;top:853.20px;font-size:14.60px;color:#f4f4f4;transform:scaleX(1.1814);transform-origin:0 0;">2,31</div><div class="t" style="left:979.00px;top:853.20px;font-size:14.60px;color:#f4f4f4;transform:scaleX(1.1814);transform-origin:0 0;">2,72</div><div class="t" style="left:1065.00px;top:853.20px;font-size:14.60px;color:#f4f4f4;transform:scaleX(1.1814);transform-origin:0 0;">1,98</div><div class="t" style="left:1141.00px;top:853.20px;font-size:14.60px;color:#f4f4f4;transform:scaleX(1.1814);transform-origin:0 0;">2,56</div><div class="t" style="left:1207.40px;top:853.20px;font-size:14.60px;color:#f4f4f4;transform:scaleX(1.2282);transform-origin:0 0;">2,11</div><div class="t" style="left:1311.10px;top:853.20px;font-size:14.60px;color:#f4f4f4;transform:scaleX(1.1814);transform-origin:0 0;">2,39</div><div class="t" style="left:1421.70px;top:853.20px;font-size:14.60px;color:#f4f4f4;transform:scaleX(1.1814);transform-origin:0 0;">2,79</div><div class="t" style="left:1489.30px;top:853.20px;font-size:14.60px;color:#f4f4f4;transform:scaleX(1.1814);transform-origin:0 0;">1,48</div><div class="t" style="left:1603.20px;top:853.20px;font-size:14.60px;color:#f4f4f4;transform:scaleX(1.1814);transform-origin:0 0;">1,22</div></div>
<div class="a" style="left:323px;top:871.8px;width:1344px;height:14.6px;background:#5e5e5e"></div>
<div class="a" style="left:343px;top:873.2px;width:645px;height:12.2px;border-radius:6px;background:#444444"></div>
<div class="a" style="left:324px;top:873px;width:15px;height:14px;border-radius:3px;background:#7a7a7a"></div>
<svg class="a" style="left:328px;top:875px" width="8" height="10"><path d="M7 0 L7 10 L1 5 Z" fill="#3c3c3c"/></svg>
<div class="a" style="left:1650px;top:873px;width:15px;height:14px;border-radius:3px;background:#7a7a7a"></div>
<svg class="a" style="left:1654px;top:875px" width="8" height="10"><path d="M1 0 L1 10 L7 5 Z" fill="#3c3c3c"/></svg>
<div class="a" style="left:1667px;top:660px;width:2px;height:226.5px;background:linear-gradient(90deg,#2a2a2a,#151515)"></div>
<div class="a" style="left:0;top:0;width:1266px;height:1005px;overflow:hidden"><div class="a" style="left:-32.4px;top:929px;width:62.5px;height:60.5px;border-radius:5px;background:linear-gradient(#b4b4b4,#8e8e8e 45%,#6c6c6c);box-shadow:inset 0 0 0 1px rgba(40,40,40,0.6)"></div><div class="a" style="left:-25.9px;top:935px;width:49.5px;height:15px;border-radius:5px;background:#8a80c8;box-shadow:inset 0 1px 2px rgba(0,0,0,0.35)"></div><div class="t" style="left:-38.4px;top:957.3px;width:74.5px;text-align:center;font-size:13px;font-weight:bold;color:#1c2230;line-height:15px"><span style="display:inline-block;text-align:left">Blue<br>Flower</span></div><div class="a" style="left:32.6px;top:929px;width:62.5px;height:60.5px;border-radius:5px;background:linear-gradient(#b4b4b4,#8e8e8e 45%,#6c6c6c);box-shadow:inset 0 0 0 1px rgba(40,40,40,0.6)"></div><div class="a" style="left:39.1px;top:935px;width:49.5px;height:15px;border-radius:5px;background:#5ec4aa;box-shadow:inset 0 1px 2px rgba(0,0,0,0.35)"></div><div class="t" style="left:26.6px;top:957.3px;width:74.5px;text-align:center;font-size:13px;font-weight:bold;color:#1c2230;line-height:15px"><span style="display:inline-block;text-align:left">Bluish<br>Green</span></div><div class="a" style="left:97.6px;top:929px;width:62.5px;height:60.5px;border-radius:5px;background:linear-gradient(#b4b4b4,#8e8e8e 45%,#6c6c6c);box-shadow:inset 0 0 0 1px rgba(40,40,40,0.6)"></div><div class="a" style="left:104.1px;top:935px;width:49.5px;height:30px;border-radius:5px;background:#e07a28;box-shadow:inset 0 1px 2px rgba(0,0,0,0.35)"></div><div class="t" style="left:91.6px;top:973.0px;width:74.5px;text-align:center;font-size:13px;font-weight:bold;color:#1c2230">Orange</div><div class="a" style="left:162.6px;top:929px;width:62.5px;height:60.5px;border-radius:5px;background:linear-gradient(#b4b4b4,#8e8e8e 45%,#6c6c6c);box-shadow:inset 0 0 0 1px rgba(40,40,40,0.6)"></div><div class="a" style="left:169.1px;top:935px;width:49.5px;height:15px;border-radius:5px;background:#4a60b4;box-shadow:inset 0 1px 2px rgba(0,0,0,0.35)"></div><div class="t" style="left:156.6px;top:957.3px;width:74.5px;text-align:center;font-size:13px;font-weight:bold;color:#1c2230;line-height:15px"><span style="display:inline-block;text-align:left">Purplish<br>Blue</span></div><div class="a" style="left:227.7px;top:929px;width:62.5px;height:60.5px;border-radius:5px;background:linear-gradient(#b4b4b4,#8e8e8e 45%,#6c6c6c);box-shadow:inset 0 0 0 1px rgba(40,40,40,0.6)"></div><div class="a" style="left:234.2px;top:935px;width:49.5px;height:15px;border-radius:5px;background:#d45462;box-shadow:inset 0 1px 2px rgba(0,0,0,0.35)"></div><div class="t" style="left:221.7px;top:957.3px;width:74.5px;text-align:center;font-size:13px;font-weight:bold;color:#1c2230;line-height:15px"><span style="display:inline-block;text-align:left">Moderate<br>Red</span></div><div class="a" style="left:292.7px;top:929px;width:62.5px;height:60.5px;border-radius:5px;background:linear-gradient(#b4b4b4,#8e8e8e 45%,#6c6c6c);box-shadow:inset 0 0 0 1px rgba(40,40,40,0.6)"></div><div class="a" style="left:299.2px;top:935px;width:49.5px;height:30px;border-radius:5px;background:#603a72;box-shadow:inset 0 1px 2px rgba(0,0,0,0.35)"></div><div class="t" style="left:286.7px;top:973.0px;width:74.5px;text-align:center;font-size:13px;font-weight:bold;color:#1c2230">Purple</div><div class="a" style="left:357.7px;top:929px;width:62.5px;height:60.5px;border-radius:5px;background:linear-gradient(#b4b4b4,#8e8e8e 45%,#6c6c6c);box-shadow:inset 0 0 0 1px rgba(40,40,40,0.6)"></div><div class="a" style="left:364.2px;top:935px;width:49.5px;height:15px;border-radius:5px;background:#a4c43c;box-shadow:inset 0 1px 2px rgba(0,0,0,0.35)"></div><div class="t" style="left:351.7px;top:957.3px;width:74.5px;text-align:center;font-size:13px;font-weight:bold;color:#1c2230;line-height:15px"><span style="display:inline-block;text-align:left">Yellow<br>Green</span></div><div class="a" style="left:422.7px;top:929px;width:62.5px;height:60.5px;border-radius:5px;background:linear-gradient(#b4b4b4,#8e8e8e 45%,#6c6c6c);box-shadow:inset 0 0 0 1px rgba(40,40,40,0.6)"></div><div class="a" style="left:429.2px;top:935px;width:49.5px;height:15px;border-radius:5px;background:#f0a430;box-shadow:inset 0 1px 2px rgba(0,0,0,0.35)"></div><div class="t" style="left:416.7px;top:957.3px;width:74.5px;text-align:center;font-size:13px;font-weight:bold;color:#1c2230;line-height:15px"><span style="display:inline-block;text-align:left">Orange<br>Yellow</span></div><div class="a" style="left:487.7px;top:929px;width:62.5px;height:60.5px;border-radius:5px;background:linear-gradient(#b4b4b4,#8e8e8e 45%,#6c6c6c);box-shadow:inset 0 0 0 1px rgba(40,40,40,0.6)"></div><div class="a" style="left:494.2px;top:935px;width:49.5px;height:30px;border-radius:5px;background:#2c3ca4;box-shadow:inset 0 1px 2px rgba(0,0,0,0.35)"></div><div class="t" style="left:481.7px;top:973.0px;width:74.5px;text-align:center;font-size:13px;font-weight:bold;color:#1c2230">Blue</div><div class="a" style="left:552.8px;top:929px;width:62.5px;height:60.5px;border-radius:5px;background:linear-gradient(#b4b4b4,#8e8e8e 45%,#6c6c6c);box-shadow:inset 0 0 0 1px rgba(40,40,40,0.6)"></div><div class="a" style="left:559.3px;top:935px;width:49.5px;height:30px;border-radius:5px;background:#449448;box-shadow:inset 0 1px 2px rgba(0,0,0,0.35)"></div><div class="t" style="left:546.8px;top:973.0px;width:74.5px;text-align:center;font-size:13px;font-weight:bold;color:#1c2230">Green</div><div class="a" style="left:617.8px;top:929px;width:62.5px;height:60.5px;border-radius:5px;background:linear-gradient(#b4b4b4,#8e8e8e 45%,#6c6c6c);box-shadow:inset 0 0 0 1px rgba(40,40,40,0.6)"></div><div class="a" style="left:624.3px;top:935px;width:49.5px;height:30px;border-radius:5px;background:#b4303a;box-shadow:inset 0 1px 2px rgba(0,0,0,0.35)"></div><div class="t" style="left:611.8px;top:973.0px;width:74.5px;text-align:center;font-size:13px;font-weight:bold;color:#1c2230">Red</div><div class="a" style="left:682.8px;top:929px;width:62.5px;height:60.5px;border-radius:5px;background:linear-gradient(#b4b4b4,#8e8e8e 45%,#6c6c6c);box-shadow:inset 0 0 0 1px rgba(40,40,40,0.6)"></div><div class="a" style="left:689.3px;top:935px;width:49.5px;height:30px;border-radius:5px;background:#eec624;box-shadow:inset 0 1px 2px rgba(0,0,0,0.35)"></div><div class="t" style="left:676.8px;top:973.0px;width:74.5px;text-align:center;font-size:13px;font-weight:bold;color:#1c2230">Yellow</div><div class="a" style="left:747.8px;top:929px;width:62.5px;height:60.5px;border-radius:5px;background:linear-gradient(#b4b4b4,#8e8e8e 45%,#6c6c6c);box-shadow:inset 0 0 0 1px rgba(40,40,40,0.6)"></div><div class="a" style="left:754.3px;top:935px;width:49.5px;height:30px;border-radius:5px;background:#bc5498;box-shadow:inset 0 1px 2px rgba(0,0,0,0.35)"></div><div class="t" style="left:741.8px;top:973.0px;width:74.5px;text-align:center;font-size:13px;font-weight:bold;color:#1c2230">Magenta</div><div class="a" style="left:812.8px;top:929px;width:62.5px;height:60.5px;border-radius:5px;background:linear-gradient(#b4b4b4,#8e8e8e 45%,#6c6c6c);box-shadow:inset 0 0 0 1px rgba(40,40,40,0.6)"></div><div class="a" style="left:819.3px;top:935px;width:49.5px;height:30px;border-radius:5px;background:#0888aa;box-shadow:inset 0 1px 2px rgba(0,0,0,0.35)"></div><div class="t" style="left:806.8px;top:973.0px;width:74.5px;text-align:center;font-size:13px;font-weight:bold;color:#1c2230">Cyan</div><div class="a" style="left:877.9px;top:929px;width:62.5px;height:60.5px;border-radius:5px;background:linear-gradient(#b4b4b4,#8e8e8e 45%,#6c6c6c);box-shadow:inset 0 0 0 1px rgba(40,40,40,0.6)"></div><div class="a" style="left:884.4px;top:935px;width:49.5px;height:30px;border-radius:5px;background:#ff0000;box-shadow:inset 0 1px 2px rgba(0,0,0,0.35)"></div><div class="t" style="left:871.9px;top:973.0px;width:74.5px;text-align:center;font-size:13px;font-weight:bold;color:#1c2230">100% Red</div><div class="a" style="left:942.9px;top:929px;width:62.5px;height:60.5px;border-radius:5px;background:linear-gradient(#b4b4b4,#8e8e8e 45%,#6c6c6c);box-shadow:inset 0 0 0 1px rgba(40,40,40,0.6)"></div><div class="a" style="left:949.4px;top:935px;width:49.5px;height:15px;border-radius:5px;background:#00ff00;box-shadow:inset 0 1px 2px rgba(0,0,0,0.35)"></div><div class="t" style="left:936.9px;top:957.3px;width:74.5px;text-align:center;font-size:13px;font-weight:bold;color:#1c2230;line-height:15px"><span style="display:inline-block;text-align:left">100%<br>Green</span></div><div class="a" style="left:1007.9px;top:929px;width:62.5px;height:60.5px;border-radius:5px;background:linear-gradient(#b4b4b4,#8e8e8e 45%,#6c6c6c);box-shadow:inset 0 0 0 1px rgba(40,40,40,0.6)"></div><div class="a" style="left:1014.4px;top:935px;width:49.5px;height:15px;border-radius:5px;background:#0000ff;box-shadow:inset 0 1px 2px rgba(0,0,0,0.35)"></div><div class="t" style="left:1001.9px;top:957.3px;width:74.5px;text-align:center;font-size:13px;font-weight:bold;color:#1c2230;line-height:15px"><span style="display:inline-block;text-align:left">100%<br>Blue</span></div><div class="a" style="left:1072.9px;top:929px;width:62.5px;height:60.5px;border-radius:5px;background:linear-gradient(#b4b4b4,#8e8e8e 45%,#6c6c6c);box-shadow:inset 0 0 0 1px rgba(40,40,40,0.6)"></div><div class="a" style="left:1079.4px;top:935px;width:49.5px;height:15px;border-radius:5px;background:#00ffff;box-shadow:inset 0 1px 2px rgba(0,0,0,0.35)"></div><div class="t" style="left:1066.9px;top:957.3px;width:74.5px;text-align:center;font-size:13px;font-weight:bold;color:#1c2230;line-height:15px"><span style="display:inline-block;text-align:left">100%<br>Cyan</span></div><div class="a" style="left:1137.9px;top:929px;width:62.5px;height:60.5px;border-radius:5px;background:linear-gradient(#b4b4b4,#8e8e8e 45%,#6c6c6c);box-shadow:inset 0 0 0 1px rgba(40,40,40,0.6)"></div><div class="a" style="left:1144.4px;top:935px;width:49.5px;height:15px;border-radius:5px;background:#ff00ff;box-shadow:inset 0 1px 2px rgba(0,0,0,0.35)"></div><div class="t" style="left:1131.9px;top:957.3px;width:74.5px;text-align:center;font-size:13px;font-weight:bold;color:#1c2230;line-height:15px"><span style="display:inline-block;text-align:left">100%<br>Magenta</span></div><div class="a" style="left:1203.0px;top:929px;width:62.5px;height:60.5px;border-radius:5px;background:#2a2a2a;box-shadow:inset 0 0 0 1px rgba(40,40,40,0.6)"></div><div class="a" style="left:1209.5px;top:935px;width:49.5px;height:15px;border-radius:5px;background:#ffff00;box-shadow:inset 0 1px 2px rgba(0,0,0,0.35)"></div><div class="t" style="left:1197.0px;top:957.3px;width:74.5px;text-align:center;font-size:13px;font-weight:bold;color:#ffffff;line-height:15px"><span style="display:inline-block;text-align:left">100%<br>Yellow</span></div></div>
<div class="a" style="left:0;top:990px;width:1266px;height:15px;background:#5c5c5c"></div>
<div class="a" style="left:452px;top:991px;width:800px;height:14px;border-radius:7px;background:#444"></div>
<div class="a" style="left:3px;top:990px;width:13px;height:15px;border-radius:3px;background:#7a7a7a"></div>
<svg class="a" style="left:6px;top:993px" width="8" height="10"><path d="M7 0 L7 10 L1 5 Z" fill="#3c3c3c"/></svg>
<div class="a" style="left:1251px;top:991px;width:14px;height:14px;border-radius:3px;background:#7a7a7a"></div>
<svg class="a" style="left:1254px;top:993px" width="8" height="10"><path d="M1 0 L1 10 L7 5 Z" fill="#3c3c3c"/></svg>
<div class="a" style="left:1266px;top:928px;width:60px;height:77px;border-radius:6px 6px 0 0;background:linear-gradient(#a8a8a8,#7a7a7a)"></div>
<div class="a" style="left:1266px;top:928px;width:60px;height:23px;border-radius:6px 6px 0 0;background:linear-gradient(#b8b8b8,#8e8e8e);border-bottom:1px solid #555"></div>
<div class="a" style="left:1287px;top:931px;width:19px;height:19px;border-radius:50%;background:linear-gradient(#6e6e6e,#a8a8a8)"></div>
<svg class="a" style="left:1290px;top:936px" width="13" height="7"><path d="M0 7 L13 7 L6.5 0 Z" fill="#303030"/></svg>
<div class="a" style="left:1276px;top:959px;width:39px;height:39px;border-radius:6px;background:#2e2e2e"></div>
<div class="a" style="left:1280px;top:962px;width:32px;height:33px;border-radius:4px;background:linear-gradient(#b0b0b0,#a8a8a8 50%,#989898 50%,#a0a0a0)"></div>
<div class="a" style="left:1288px;top:970px;width:17px;height:17px;background:linear-gradient(#1a1a1a,#1a1a1a 50%,#000 50%)"></div>
<div class="a" style="left:1327px;top:928px;width:58.0px;height:37.5px;background:linear-gradient(#bababa,#8a8a8a);border-radius:6px 0 0 0"></div>
<div class="a" style="left:1386px;top:928px;width:55.0px;height:37.5px;background:linear-gradient(#bababa,#8a8a8a);border-radius:0"></div>
<div class="a" style="left:1442px;top:928px;width:55.0px;height:37.5px;background:linear-gradient(#8e8e8e,#5e5e5e);border-radius:0"></div>
<div class="a" style="left:1498.5px;top:928px;width:55.0px;height:37.5px;background:linear-gradient(#bcbcbc,#8a8a8a);border-radius:0"></div>
<div class="a" style="left:1554.5px;top:928px;width:55.5px;height:37.5px;background:linear-gradient(#444444,#2c2c2c);border-radius:0"></div>
<div class="a" style="left:1611px;top:928px;width:58.0px;height:37.5px;background:linear-gradient(#bcbcbc,#8a8a8a);border-radius:0"></div>
<div class="a" style="left:1344px;top:935px;width:24px;height:24px;border-radius:50%;background:linear-gradient(#6c6c6c,#a6a6a6)"></div>
<div class="a" style="left:1350.5px;top:941.5px;width:11px;height:11px;background:#2f2f2f"></div>
<div class="a" style="left:1401px;top:935px;width:24px;height:24px;border-radius:50%;background:linear-gradient(#6c6c6c,#a6a6a6)"></div>
<svg class="a" style="left:1408px;top:939.5px" width="13" height="15"><path d="M0.5 0 L12.5 7.5 L0.5 15 Z" fill="#2f2f2f"/></svg>
<div class="a" style="left:1457.2px;top:934.3000000000001px;width:24.6px;height:24.6px;border-radius:50%;background:linear-gradient(#5c5c5c,#8a8a8a)"></div>
<svg class="a" style="left:1460px;top:940px" width="20" height="15" viewBox="0 0 20 15"><path d="M5 1.5 H2.5 V13.5 H5 M15 1.5 H17.5 V13.5 H15" stroke="#262626" stroke-width="2.4" fill="none"/><circle cx="8" cy="7.5" r="1.3" fill="#262626"/><circle cx="12" cy="7.5" r="1.3" fill="#262626"/></svg>
<div class="a" style="left:1514.1000000000001px;top:934.3000000000001px;width:24.6px;height:24.6px;border-radius:50%;background:linear-gradient(#8a8a8a,#c4c4c4)"></div>
<svg class="a" style="left:1517px;top:942px" width="19" height="10" viewBox="0 0 19 10"><path d="M9.5 5 C7 1.5 2 1 2 5 C2 9 7 8.5 9.5 5 C12 1.5 17 1 17 5 C17 9 12 8.5 9.5 5 Z" stroke="#333" stroke-width="2.3" fill="none"/></svg>
<div class="a" style="left:1570.4px;top:934.3000000000001px;width:24.6px;height:24.6px;border-radius:50%;background:linear-gradient(#2a2a2a,#474747)"></div>
<svg class="a" style="left:1575.5px;top:939.5px" width="15" height="15" viewBox="0 0 15 15"><path d="M3 7 A4.8 4.8 0 0 1 11 3.6 M12 8 A4.8 4.8 0 0 1 4 11.4" stroke="#161616" stroke-width="2.6" fill="none"/><path d="M9 1 L13.8 2.5 L11.8 6.8 Z M6 14 L1.2 12.5 L3.2 8.2 Z" fill="#161616"/></svg>
<div class="a" style="left:1626.8px;top:933.8000000000001px;width:25.6px;height:25.6px;border-radius:50%;background:linear-gradient(#7c7c7c,#b8b8b8)"></div>
<div class="a" style="left:1662px;top:928px;width:7px;height:77px;background:linear-gradient(90deg,rgba(0,0,0,0),rgba(0,0,0,0.35))"></div>
<div class="a" style="left:1327px;top:966.5px;width:169px;height:39px;border-radius:6px 6px 0 0;background:linear-gradient(#bcbcbc,#9a9a9a 50%,#7e7e7e)"></div>
<div class="a" style="left:1499px;top:966.5px;width:170px;height:39px;border-radius:6px 0 0 0;background:linear-gradient(#bcbcbc,#9a9a9a 50%,#7e7e7e)"></div>
<div class="a" style="left:1353px;top:973px;width:26px;height:26px;border-radius:50%;background:linear-gradient(#6c6c6c,#a6a6a6)"></div>
<svg class="a" style="left:1358.5px;top:980px" width="15" height="13" viewBox="0 0 15 13"><path d="M7 1 L2 6.5 L7 12 M13 1 L8 6.5 L13 12" stroke="#3a3a3a" stroke-width="2" fill="none"/></svg>
<div class="a" style="left:1620px;top:973px;width:26px;height:26px;border-radius:50%;background:linear-gradient(#6c6c6c,#a6a6a6)"></div>
<svg class="a" style="left:1626px;top:980px" width="15" height="13" viewBox="0 0 15 13"><path d="M2 1 L7 6.5 L2 12 M8 1 L13 6.5 L8 12" stroke="#3a3a3a" stroke-width="2" fill="none"/></svg>
<div class="t" style="left:1399.00px;top:972.36px;font-size:27.60px;color:#353535;font-weight:bold;transform:scaleX(0.9625);transform-origin:0 0;">Back</div>
<div class="t" style="left:1532.50px;top:972.36px;font-size:27.60px;color:#353535;font-weight:bold;transform:scaleX(1.1033);transform-origin:0 0;">Next</div>
<div class="a" style="left:974px;top:88px;width:695px;height:558px;background:#1b1b1b"></div>
<div class="a" style="left:981px;top:95px;width:681px;height:545px;background:#333333"></div>
<div class="a" style="left:1662px;top:88px;width:7px;height:558px;background:linear-gradient(90deg,#1b1b1b,#0e0e0e)"></div>
<div class="t" style="left:1220px;top:100px;width:200px;text-align:center;font-size:14px;color:#d8d8d8">CIE 1976 u'v'</div>
<div class="a" style="left:1019px;top:119px;width:639px;height:491px;background:#232323;overflow:hidden"><div class="a" style="left:0;top:0;width:639px;height:491px;clip-path:path('M273.4,477.6L272.2,478.2L271.0,478.2L268.5,477.4L262.0,472.7L249.8,462.5L230.0,446.2L199.8,419.9L179.8,399.6L153.3,367.6L121.9,323.9L88.0,269.5L55.3,210.7L29.7,154.2L12.4,106.6C8.0,92.8 5.3,81.3 3.4,71.3C1.5,61.3 1.0,53.5 1.2,46.6C1.4,39.7 2.7,34.3 4.6,29.7C6.6,25.1 9.5,21.7 12.8,19.0C16.1,16.2 20.1,14.7 24.3,13.5C28.6,12.2 33.3,11.9 38.1,11.4C42.9,11.0 48.0,11.0 53.1,10.9C58.1,10.9 63.1,11.0 68.3,11.1C73.4,11.3 78.6,11.5 84.1,11.9C89.6,12.2 95.3,12.6 101.2,13.1L119.8,14.8L140.2,16.8L162.9,19.3L187.9,22.1L215.6,25.2L246.1,28.7L279.3,32.5L315.1,36.6L353.0,40.9L392.0,45.4L429.7,49.8L466.5,54.0L499.7,57.8L529.2,61.1L554.2,64.0L575.1,66.4L592.8,68.5L621.1,71.7L639.7,73.8L650.8,75.1L660.4,76.2Z');isolation:isolate;background:#000"><div class="a" style="left:0;top:0;width:639px;height:491px;clip-path:polygon(210.55px 107.88px,217.06px 38.65px,480.06px 63.22px,324.83px 221.34px);background:conic-gradient(from 4.37deg at 186.68px 361.96px,rgb(255,255,0) 0.00deg,rgb(255,244,0) 1.52deg,rgb(255,214,0) 3.05deg,rgb(255,190,0) 4.57deg,rgb(255,169,0) 6.09deg,rgb(255,151,0) 7.62deg,rgb(255,136,0) 9.14deg,rgb(255,122,0) 10.66deg,rgb(255,110,0) 12.19deg,rgb(255,99,0) 13.71deg,rgb(255,89,0) 15.23deg,rgb(255,80,0) 16.75deg,rgb(255,72,0) 18.28deg,rgb(255,64,0) 19.80deg,rgb(255,57,0) 21.32deg,rgb(255,51,0) 22.85deg,rgb(255,45,0) 24.37deg,rgb(255,39,0) 25.89deg,rgb(255,34,0) 27.42deg,rgb(255,29,0) 28.94deg,rgb(255,25,0) 30.46deg,rgb(255,20,0) 31.99deg,rgb(255,16,0) 33.51deg,rgb(255,12,0) 35.03deg,rgb(255,8,0) 36.56deg,rgb(255,5,0) 38.08deg,rgb(255,1,0) 39.60deg,rgb(255,0,0) 41.13deg);mix-blend-mode:plus-lighter"></div><div class="a" style="left:0;top:0;width:639px;height:491px;clip-path:polygon(210.55px 107.88px,217.06px 38.65px,480.06px 63.22px,324.83px 221.34px);background:conic-gradient(from 94.33deg at 132.92px 30.79px,rgb(0,0,0) 0.00deg,rgb(0,0,2) 1.54deg,rgb(0,0,9) 3.07deg,rgb(0,0,16) 4.61deg,rgb(0,0,22) 6.14deg,rgb(0,0,29) 7.68deg,rgb(0,0,37) 9.21deg,rgb(0,0,44) 10.75deg,rgb(0,0,51) 12.29deg,rgb(0,0,59) 13.82deg,rgb(0,0,67) 15.36deg,rgb(0,0,75) 16.89deg,rgb(0,0,83) 18.43deg,rgb(0,0,92) 19.97deg,rgb(0,0,101) 21.50deg,rgb(0,0,110) 23.04deg,rgb(0,0,120) 24.57deg,rgb(0,0,130) 26.11deg,rgb(0,0,140) 27.64deg,rgb(0,0,152) 29.18deg,rgb(0,0,163) 30.72deg,rgb(0,0,175) 32.25deg,rgb(0,0,188) 33.79deg,rgb(0,0,202) 35.32deg,rgb(0,0,217) 36.86deg,rgb(0,0,232) 38.40deg,rgb(0,0,249) 39.93deg,rgb(0,0,255) 41.47deg);mix-blend-mode:plus-lighter"></div><div class="a" style="left:0;top:0;width:639px;height:491px;clip-path:polygon(210.55px 107.88px,147.15px 118.38px,132.92px 30.79px,217.06px 38.65px);background:conic-gradient(from 349.78deg at 186.68px 361.96px,rgb(0,255,0) 0.00deg,rgb(7,255,0) 1.51deg,rgb(29,255,0) 3.02deg,rgb(51,255,0) 4.52deg,rgb(75,255,0) 6.03deg,rgb(99,255,0) 7.54deg,rgb(125,255,0) 9.05deg,rgb(152,255,0) 10.56deg,rgb(181,255,0) 12.06deg,rgb(211,255,0) 13.57deg,rgb(244,255,0) 15.08deg,rgb(255,255,0) 16.59deg);mix-blend-mode:plus-lighter"></div><div class="a" style="left:0;top:0;width:639px;height:491px;clip-path:polygon(210.55px 107.88px,147.15px 118.38px,132.92px 30.79px,217.06px 38.65px);background:conic-gradient(from 259.59deg at 480.06px 63.22px,rgb(0,0,255) 0.00deg,rgb(0,0,243) 1.52deg,rgb(0,0,210) 3.04deg,rgb(0,0,179) 4.57deg,rgb(0,0,150) 6.09deg,rgb(0,0,123) 7.61deg,rgb(0,0,97) 9.13deg,rgb(0,0,73) 10.66deg,rgb(0,0,50) 12.18deg,rgb(0,0,28) 13.70deg,rgb(0,0,7) 15.22deg,rgb(0,0,0) 16.75deg);mix-blend-mode:plus-lighter"></div><div class="a" style="left:0;top:0;width:639px;height:491px;clip-path:polygon(210.55px 107.88px,324.83px 221.34px,186.68px 361.96px,147.15px 118.38px);background:conic-gradient(from 133.80deg at 132.92px 30.79px,rgb(255,0,255) 0.00deg,rgb(249,0,255) 1.52deg,rgb(232,0,255) 3.04deg,rgb(217,0,255) 4.56deg,rgb(202,0,255) 6.08deg,rgb(188,0,255) 7.60deg,rgb(175,0,255) 9.12deg,rgb(162,0,255) 10.64deg,rgb(150,0,255) 12.15deg,rgb(138,0,255) 13.67deg,rgb(127,0,255) 15.19deg,rgb(116,0,255) 16.71deg,rgb(106,0,255) 18.23deg,rgb(96,0,255) 19.75deg,rgb(86,0,255) 21.27deg,rgb(77,0,255) 22.79deg,rgb(68,0,255) 24.31deg,rgb(59,0,255) 25.83deg,rgb(51,0,255) 27.35deg,rgb(42,0,255) 28.87deg,rgb(34,0,255) 30.39deg,rgb(26,0,255) 31.91deg,rgb(18,0,255) 33.43deg,rgb(10,0,255) 34.94deg,rgb(3,0,255) 36.46deg,rgb(0,0,255) 37.98deg);mix-blend-mode:plus-lighter"></div><div class="a" style="left:0;top:0;width:639px;height:491px;clip-path:polygon(210.55px 107.88px,324.83px 221.34px,186.68px 361.96px,147.15px 118.38px);background:conic-gradient(from 223.47deg at 480.06px 63.22px,rgb(0,0,0) 0.00deg,rgb(0,1,0) 1.52deg,rgb(0,5,0) 3.05deg,rgb(0,9,0) 4.57deg,rgb(0,14,0) 6.10deg,rgb(0,18,0) 7.62deg,rgb(0,23,0) 9.15deg,rgb(0,28,0) 10.67deg,rgb(0,33,0) 12.20deg,rgb(0,39,0) 13.72deg,rgb(0,45,0) 15.25deg,rgb(0,52,0) 16.77deg,rgb(0,59,0) 18.30deg,rgb(0,67,0) 19.82deg,rgb(0,75,0) 21.35deg,rgb(0,85,0) 22.87deg,rgb(0,95,0) 24.40deg,rgb(0,106,0) 25.92deg,rgb(0,119,0) 27.45deg,rgb(0,133,0) 28.97deg,rgb(0,149,0) 30.50deg,rgb(0,167,0) 32.02deg,rgb(0,188,0) 33.55deg,rgb(0,213,0) 35.07deg,rgb(0,243,0) 36.60deg,rgb(0,255,0) 38.12deg);mix-blend-mode:plus-lighter"></div><div class="a" style="left:0;top:0;width:639px;height:491px;clip-path:polygon(217.06px 38.65px,480.06px 63.22px,12215.18px -11886.64px,1432.12px -12893.88px);background:conic-gradient(from 4.37deg at 186.68px 361.96px,rgb(153,153,0) 0.00deg,rgb(153,146,0) 1.52deg,rgb(153,129,0) 3.05deg,rgb(153,114,0) 4.57deg,rgb(153,101,0) 6.09deg,rgb(153,91,0) 7.61deg,rgb(153,81,0) 9.14deg,rgb(153,73,0) 10.66deg,rgb(153,66,0) 12.18deg,rgb(153,59,0) 13.70deg,rgb(153,53,0) 15.23deg,rgb(153,48,0) 16.75deg,rgb(153,43,0) 18.27deg,rgb(153,39,0) 19.80deg,rgb(153,34,0) 21.32deg,rgb(153,31,0) 22.84deg,rgb(153,27,0) 24.36deg,rgb(153,24,0) 25.89deg,rgb(153,20,0) 27.41deg,rgb(153,18,0) 28.93deg,rgb(153,15,0) 30.45deg,rgb(153,12,0) 31.98deg,rgb(153,10,0) 33.50deg,rgb(153,7,0) 35.02deg,rgb(153,5,0) 36.55deg,rgb(153,3,0) 38.07deg,rgb(153,1,0) 39.59deg,rgb(153,0,0) 41.11deg);mix-blend-mode:plus-lighter"></div><div class="a" style="left:0;top:0;width:639px;height:491px;clip-path:polygon(132.92px 30.79px,217.06px 38.65px,1432.12px -12893.88px,-2017.37px -13215.98px);background:conic-gradient(from 349.78deg at 186.68px 361.96px,rgb(0,153,0) 0.00deg,rgb(4,153,0) 1.51deg,rgb(17,153,0) 3.02deg,rgb(31,153,0) 4.52deg,rgb(45,153,0) 6.03deg,rgb(60,153,0) 7.54deg,rgb(75,153,0) 9.05deg,rgb(91,153,0) 10.56deg,rgb(109,153,0) 12.06deg,rgb(127,153,0) 13.57deg,rgb(146,153,0) 15.08deg,rgb(153,153,0) 16.59deg);mix-blend-mode:plus-lighter"></div><div class="a" style="left:0;top:0;width:639px;height:491px;clip-path:polygon(147.15px 118.38px,132.92px 30.79px,-13752.50px -1266.13px,-13169.35px 2324.98px);background:conic-gradient(from 259.59deg at 480.06px 63.22px,rgb(0,153,153) 0.00deg,rgb(0,153,146) 1.52deg,rgb(0,153,126) 3.04deg,rgb(0,153,108) 4.57deg,rgb(0,153,90) 6.09deg,rgb(0,153,74) 7.61deg,rgb(0,153,58) 9.13deg,rgb(0,153,44) 10.66deg,rgb(0,153,30) 12.18deg,rgb(0,153,17) 13.70deg,rgb(0,153,4) 15.22deg,rgb(0,153,0) 16.74deg);mix-blend-mode:plus-lighter"></div><div class="a" style="left:0;top:0;width:639px;height:491px;clip-path:polygon(186.68px 361.96px,147.15px 118.38px,-13169.35px 2324.98px,-11548.44px 12311.82px);background:conic-gradient(from 223.48deg at 480.06px 63.22px,rgb(0,0,153) 0.00deg,rgb(0,1,153) 1.52deg,rgb(0,3,153) 3.05deg,rgb(0,6,153) 4.57deg,rgb(0,8,153) 6.10deg,rgb(0,11,153) 7.62deg,rgb(0,14,153) 9.15deg,rgb(0,17,153) 10.67deg,rgb(0,20,153) 12.20deg,rgb(0,24,153) 13.72deg,rgb(0,27,153) 15.24deg,rgb(0,31,153) 16.77deg,rgb(0,35,153) 18.29deg,rgb(0,40,153) 19.82deg,rgb(0,45,153) 21.34deg,rgb(0,51,153) 22.87deg,rgb(0,57,153) 24.39deg,rgb(0,64,153) 25.92deg,rgb(0,71,153) 27.44deg,rgb(0,80,153) 28.96deg,rgb(0,89,153) 30.49deg,rgb(0,100,153) 32.01deg,rgb(0,113,153) 33.54deg,rgb(0,128,153) 35.06deg,rgb(0,146,153) 36.59deg,rgb(0,153,153) 38.11deg);mix-blend-mode:plus-lighter"></div><div class="a" style="left:0;top:0;width:639px;height:491px;clip-path:polygon(480.06px 63.22px,324.83px 221.34px,8000.99px 7843.16px,14365.48px 1360.14px);background:conic-gradient(from 94.34deg at 132.92px 30.79px,rgb(153,0,0) 0.00deg,rgb(153,0,1) 1.54deg,rgb(153,0,5) 3.07deg,rgb(153,0,9) 4.61deg,rgb(153,0,13) 6.14deg,rgb(153,0,18) 7.68deg,rgb(153,0,22) 9.21deg,rgb(153,0,26) 10.75deg,rgb(153,0,31) 12.28deg,rgb(153,0,35) 13.82deg,rgb(153,0,40) 15.36deg,rgb(153,0,45) 16.89deg,rgb(153,0,50) 18.43deg,rgb(153,0,55) 19.96deg,rgb(153,0,61) 21.50deg,rgb(153,0,66) 23.03deg,rgb(153,0,72) 24.57deg,rgb(153,0,78) 26.10deg,rgb(153,0,84) 27.64deg,rgb(153,0,91) 29.18deg,rgb(153,0,98) 30.71deg,rgb(153,0,105) 32.25deg,rgb(153,0,113) 33.78deg,rgb(153,0,121) 35.32deg,rgb(153,0,130) 36.85deg,rgb(153,0,139) 38.39deg,rgb(153,0,149) 39.92deg,rgb(153,0,153) 41.46deg);mix-blend-mode:plus-lighter"></div><div class="a" style="left:0;top:0;width:639px;height:491px;clip-path:polygon(324.83px 221.34px,186.68px 361.96px,2336.98px 13608.74px,8000.99px 7843.16px);background:conic-gradient(from 133.80deg at 132.92px 30.79px,rgb(153,0,153) 0.00deg,rgb(149,0,153) 1.52deg,rgb(139,0,153) 3.04deg,rgb(130,0,153) 4.56deg,rgb(121,0,153) 6.08deg,rgb(113,0,153) 7.60deg,rgb(105,0,153) 9.12deg,rgb(97,0,153) 10.64deg,rgb(90,0,153) 12.15deg,rgb(83,0,153) 13.67deg,rgb(76,0,153) 15.19deg,rgb(70,0,153) 16.71deg,rgb(64,0,153) 18.23deg,rgb(58,0,153) 19.75deg,rgb(52,0,153) 21.27deg,rgb(46,0,153) 22.79deg,rgb(41,0,153) 24.31deg,rgb(36,0,153) 25.83deg,rgb(30,0,153) 27.35deg,rgb(25,0,153) 28.87deg,rgb(20,0,153) 30.39deg,rgb(16,0,153) 31.91deg,rgb(11,0,153) 33.43deg,rgb(6,0,153) 34.94deg,rgb(2,0,153) 36.46deg,rgb(0,0,153) 37.98deg);mix-blend-mode:plus-lighter"></div><div class="a" style="left:0;top:0;width:639px;height:491px;clip-path:polygon(132.92px 30.79px,-2017.37px -13215.98px,-13752.50px -1266.13px);background:rgb(0, 153, 0);mix-blend-mode:plus-lighter"></div><div class="a" style="left:0;top:0;width:639px;height:491px;clip-path:polygon(480.06px 63.22px,12215.18px -11886.64px,14365.48px 1360.14px);background:rgb(153, 0, 0);mix-blend-mode:plus-lighter"></div><div class="a" style="left:0;top:0;width:639px;height:491px;clip-path:polygon(186.68px 361.96px,-11548.44px 12311.82px,2336.98px 13608.74px);background:rgb(0, 0, 153);mix-blend-mode:plus-lighter"></div></div></div>
<svg class="a" style="left:0;top:0" width="1669" height="1005"><defs><clipPath id="plotc"><rect x="1019" y="119" width="639" height="491"/></clipPath></defs><rect x="1019" y="119" width="639" height="491" fill="none" stroke="#a8a8a8" stroke-width="1.5"/><line x1="1013" y1="610.2" x2="1019" y2="610.2" stroke="#d0d0d0" stroke-width="1.3"/><line x1="1018.7" y1="610" x2="1018.7" y2="616" stroke="#d0d0d0" stroke-width="1.3"/><line x1="1013" y1="569.3" x2="1019" y2="569.3" stroke="#d0d0d0" stroke-width="1.3"/><line x1="1072.0" y1="610" x2="1072.0" y2="616" stroke="#d0d0d0" stroke-width="1.3"/><line x1="1013" y1="528.4" x2="1019" y2="528.4" stroke="#d0d0d0" stroke-width="1.3"/><line x1="1125.3" y1="610" x2="1125.3" y2="616" stroke="#d0d0d0" stroke-width="1.3"/><line x1="1013" y1="487.4" x2="1019" y2="487.4" stroke="#d0d0d0" stroke-width="1.3"/><line x1="1178.6" y1="610" x2="1178.6" y2="616" stroke="#d0d0d0" stroke-width="1.3"/><line x1="1013" y1="446.5" x2="1019" y2="446.5" stroke="#d0d0d0" stroke-width="1.3"/><line x1="1231.9" y1="610" x2="1231.9" y2="616" stroke="#d0d0d0" stroke-width="1.3"/><line x1="1013" y1="405.6" x2="1019" y2="405.6" stroke="#d0d0d0" stroke-width="1.3"/><line x1="1285.2" y1="610" x2="1285.2" y2="616" stroke="#d0d0d0" stroke-width="1.3"/><line x1="1013" y1="364.6" x2="1019" y2="364.6" stroke="#d0d0d0" stroke-width="1.3"/><line x1="1338.4" y1="610" x2="1338.4" y2="616" stroke="#d0d0d0" stroke-width="1.3"/><line x1="1013" y1="323.7" x2="1019" y2="323.7" stroke="#d0d0d0" stroke-width="1.3"/><line x1="1391.7" y1="610" x2="1391.7" y2="616" stroke="#d0d0d0" stroke-width="1.3"/><line x1="1013" y1="282.8" x2="1019" y2="282.8" stroke="#d0d0d0" stroke-width="1.3"/><line x1="1445.0" y1="610" x2="1445.0" y2="616" stroke="#d0d0d0" stroke-width="1.3"/><line x1="1013" y1="241.9" x2="1019" y2="241.9" stroke="#d0d0d0" stroke-width="1.3"/><line x1="1498.3" y1="610" x2="1498.3" y2="616" stroke="#d0d0d0" stroke-width="1.3"/><line x1="1013" y1="201.0" x2="1019" y2="201.0" stroke="#d0d0d0" stroke-width="1.3"/><line x1="1551.6" y1="610" x2="1551.6" y2="616" stroke="#d0d0d0" stroke-width="1.3"/><line x1="1013" y1="160.0" x2="1019" y2="160.0" stroke="#d0d0d0" stroke-width="1.3"/><line x1="1604.9" y1="610" x2="1604.9" y2="616" stroke="#d0d0d0" stroke-width="1.3"/><g clip-path="url(#plotc)"><rect x="1144.3" y="141.8" width="13.6" height="13.6" fill="#00c000" fill-opacity="0.35" stroke="#f4f4f4" stroke-opacity="0.9" stroke-width="1.4"/><circle cx="1154.5" cy="148.2" r="4.6" fill="#22e022" stroke="#1a1a1a" stroke-width="1.2"/><rect x="1169.6" y="165.4" width="13.6" height="13.6" fill="#40a048" fill-opacity="0.35" stroke="#f4f4f4" stroke-opacity="0.9" stroke-width="1.4"/><circle cx="1178.8" cy="172.8" r="4.6" fill="#4a8a50" stroke="#1a1a1a" stroke-width="1.2"/><rect x="1208.4" y="157.5" width="13.6" height="13.6" fill="#a0d040" fill-opacity="0.35" stroke="#f4f4f4" stroke-opacity="0.9" stroke-width="1.4"/><circle cx="1217.1" cy="164.3" r="4.6" fill="#98b048" stroke="#1a1a1a" stroke-width="1.2"/><rect x="1205.6" y="179.4" width="13.6" height="13.6" fill="#80b040" fill-opacity="0.35" stroke="#f4f4f4" stroke-opacity="0.9" stroke-width="1.4"/><circle cx="1215.4" cy="186.2" r="4.6" fill="#5a6a40" stroke="#1a1a1a" stroke-width="1.2"/><rect x="1228.7" y="149.6" width="13.6" height="13.6" fill="#e0e000" fill-opacity="0.35" stroke="#f4f4f4" stroke-opacity="0.9" stroke-width="1.4"/><circle cx="1238.6" cy="156.4" r="4.6" fill="#ffff10" stroke="#1a1a1a" stroke-width="1.2"/><rect x="1255.7" y="153.0" width="13.6" height="13.6" fill="#e0c020" fill-opacity="0.35" stroke="#f4f4f4" stroke-opacity="0.9" stroke-width="1.4"/><circle cx="1265.5" cy="160.4" r="4.6" fill="#e8c030" stroke="#1a1a1a" stroke-width="1.2"/><rect x="1288.3" y="160.3" width="13.6" height="13.6" fill="#e09020" fill-opacity="0.35" stroke="#f4f4f4" stroke-opacity="0.9" stroke-width="1.4"/><circle cx="1298.2" cy="167.5" r="4.6" fill="#e0a030" stroke="#1a1a1a" stroke-width="1.2"/><rect x="1331.0" y="164.2" width="13.6" height="13.6" fill="#e06020" fill-opacity="0.35" stroke="#f4f4f4" stroke-opacity="0.9" stroke-width="1.4"/><circle cx="1340.7" cy="171.1" r="4.6" fill="#d87828" stroke="#1a1a1a" stroke-width="1.2"/><rect x="1490.2" y="173.8" width="13.6" height="13.6" fill="#e00000" fill-opacity="0.35" stroke="#f4f4f4" stroke-opacity="0.9" stroke-width="1.4"/><circle cx="1498.0" cy="180.6" r="4.6" fill="#ff1010" stroke="#1a1a1a" stroke-width="1.2"/><rect x="1271.4" y="193.5" width="13.6" height="13.6" fill="#d07060" fill-opacity="0.35" stroke="#f4f4f4" stroke-opacity="0.9" stroke-width="1.4"/><circle cx="1279.2" cy="199.5" r="4.6" fill="#705040" stroke="#1a1a1a" stroke-width="1.2"/><rect x="1259.6" y="199.1" width="13.6" height="13.6" fill="#e8a090" fill-opacity="0.35" stroke="#f4f4f4" stroke-opacity="0.9" stroke-width="1.4"/><circle cx="1269.8" cy="205.2" r="4.6" fill="#c09080" stroke="#1a1a1a" stroke-width="1.2"/><rect x="1410.9" y="194.1" width="13.6" height="13.6" fill="#e03040" fill-opacity="0.35" stroke="#f4f4f4" stroke-opacity="0.9" stroke-width="1.4"/><circle cx="1419.9" cy="200.3" r="4.6" fill="#b03040" stroke="#1a1a1a" stroke-width="1.2"/><rect x="1349.0" y="206.4" width="13.6" height="13.6" fill="#e04060" fill-opacity="0.35" stroke="#f4f4f4" stroke-opacity="0.9" stroke-width="1.4"/><circle cx="1357.1" cy="212.3" r="4.6" fill="#c05060" stroke="#1a1a1a" stroke-width="1.2"/><rect x="1176.4" y="211.5" width="13.6" height="13.6" fill="#80e0c0" fill-opacity="0.35" stroke="#f4f4f4" stroke-opacity="0.9" stroke-width="1.4"/><circle cx="1184.5" cy="218.8" r="4.6" fill="#60a898" stroke="#1a1a1a" stroke-width="1.2"/><rect x="1159.5" y="230.1" width="13.6" height="13.6" fill="#00d0e0" fill-opacity="0.35" stroke="#f4f4f4" stroke-opacity="0.9" stroke-width="1.4"/><circle cx="1167.8" cy="236.6" r="4.6" fill="#10ffff" stroke="#1a1a1a" stroke-width="1.2"/><rect x="1164.6" y="261.0" width="13.6" height="13.6" fill="#0090b0" fill-opacity="0.35" stroke="#f4f4f4" stroke-opacity="0.9" stroke-width="1.4"/><circle cx="1173.1" cy="268.1" r="4.6" fill="#0888a8" stroke="#1a1a1a" stroke-width="1.2"/><rect x="1199.4" y="258.7" width="13.6" height="13.6" fill="#6090e0" fill-opacity="0.35" stroke="#f4f4f4" stroke-opacity="0.9" stroke-width="1.4"/><circle cx="1207.5" cy="265.0" r="4.6" fill="#6080b0" stroke="#1a1a1a" stroke-width="1.2"/><rect x="1219.1" y="263.8" width="13.6" height="13.6" fill="#a0a0f0" fill-opacity="0.35" stroke="#f4f4f4" stroke-opacity="0.9" stroke-width="1.4"/><circle cx="1227.6" cy="270.7" r="4.6" fill="#8888c0" stroke="#1a1a1a" stroke-width="1.2"/><rect x="1254.5" y="281.8" width="13.6" height="13.6" fill="#b060f0" fill-opacity="0.35" stroke="#f4f4f4" stroke-opacity="0.9" stroke-width="1.4"/><circle cx="1263.3" cy="288.2" r="4.6" fill="#603878" stroke="#1a1a1a" stroke-width="1.2"/><rect x="1317.0" y="252.0" width="13.6" height="13.6" fill="#f060b0" fill-opacity="0.35" stroke="#f4f4f4" stroke-opacity="0.9" stroke-width="1.4"/><circle cx="1326.0" cy="258.5" r="4.6" fill="#c05098" stroke="#1a1a1a" stroke-width="1.2"/><rect x="1336.1" y="331.9" width="13.6" height="13.6" fill="#e000e0" fill-opacity="0.35" stroke="#f4f4f4" stroke-opacity="0.9" stroke-width="1.4"/><circle cx="1343.3" cy="335.6" r="4.6" fill="#ff10ff" stroke="#1a1a1a" stroke-width="1.2"/><rect x="1201.7" y="311.0" width="13.6" height="13.6" fill="#4060f0" fill-opacity="0.35" stroke="#f4f4f4" stroke-opacity="0.9" stroke-width="1.4"/><circle cx="1208.9" cy="316.9" r="4.6" fill="#4a60b0" stroke="#1a1a1a" stroke-width="1.2"/><rect x="1201.7" y="361.1" width="13.6" height="13.6" fill="#3040f0" fill-opacity="0.35" stroke="#f4f4f4" stroke-opacity="0.9" stroke-width="1.4"/><circle cx="1208.9" cy="366.8" r="4.6" fill="#3040a0" stroke="#1a1a1a" stroke-width="1.2"/><rect x="1198.6" y="473.9" width="13" height="13" fill="none" stroke="#f0f0f0" stroke-width="1.6"/><circle cx="1205" cy="478" r="4.5" fill="#0000ee"/><rect x="1222.3" y="219.4" width="12.8" height="12.4" fill="#ffffff" stroke="#000" stroke-width="2.2"/><circle cx="1231.4" cy="226" r="4.3" fill="#9c9c9c" stroke="#202020" stroke-width="1.1"/><circle cx="1262.8" cy="220.2" r="5" fill="#000"/></g></svg>
<div class="t" style="left:960.5px;top:603.6px;width:52px;text-align:right;font-size:14.5px;color:#e0e0e0">0</div>
<div class="t" style="left:988.7px;top:620px;width:60px;text-align:center;font-size:14.5px;color:#e0e0e0">0</div>
<div class="t" style="left:960.5px;top:562.7px;width:52px;text-align:right;font-size:14.5px;color:#e0e0e0">0,05</div>
<div class="t" style="left:1042.0px;top:620px;width:60px;text-align:center;font-size:14.5px;color:#e0e0e0">0,05</div>
<div class="t" style="left:960.5px;top:521.8px;width:52px;text-align:right;font-size:14.5px;color:#e0e0e0">0,1</div>
<div class="t" style="left:1095.3px;top:620px;width:60px;text-align:center;font-size:14.5px;color:#e0e0e0">0,1</div>
<div class="t" style="left:960.5px;top:480.8px;width:52px;text-align:right;font-size:14.5px;color:#e0e0e0">0,15</div>
<div class="t" style="left:1148.6px;top:620px;width:60px;text-align:center;font-size:14.5px;color:#e0e0e0">0,15</div>
<div class="t" style="left:960.5px;top:439.9px;width:52px;text-align:right;font-size:14.5px;color:#e0e0e0">0,2</div>
<div class="t" style="left:1201.9px;top:620px;width:60px;text-align:center;font-size:14.5px;color:#e0e0e0">0,2</div>
<div class="t" style="left:960.5px;top:399.0px;width:52px;text-align:right;font-size:14.5px;color:#e0e0e0">0,25</div>
<div class="t" style="left:1255.2px;top:620px;width:60px;text-align:center;font-size:14.5px;color:#e0e0e0">0,25</div>
<div class="t" style="left:960.5px;top:358.0px;width:52px;text-align:right;font-size:14.5px;color:#e0e0e0">0,3</div>
<div class="t" style="left:1308.4px;top:620px;width:60px;text-align:center;font-size:14.5px;color:#e0e0e0">0,3</div>
<div class="t" style="left:960.5px;top:317.1px;width:52px;text-align:right;font-size:14.5px;color:#e0e0e0">0,35</div>
<div class="t" style="left:1361.7px;top:620px;width:60px;text-align:center;font-size:14.5px;color:#e0e0e0">0,35</div>
<div class="t" style="left:960.5px;top:276.2px;width:52px;text-align:right;font-size:14.5px;color:#e0e0e0">0,4</div>
<div class="t" style="left:1415.0px;top:620px;width:60px;text-align:center;font-size:14.5px;color:#e0e0e0">0,4</div>
<div class="t" style="left:960.5px;top:235.3px;width:52px;text-align:right;font-size:14.5px;color:#e0e0e0">0,45</div>
<div class="t" style="left:1468.3px;top:620px;width:60px;text-align:center;font-size:14.5px;color:#e0e0e0">0,45</div>
<div class="t" style="left:960.5px;top:194.4px;width:52px;text-align:right;font-size:14.5px;color:#e0e0e0">0,5</div>
<div class="t" style="left:1521.6px;top:620px;width:60px;text-align:center;font-size:14.5px;color:#e0e0e0">0,5</div>
<div class="t" style="left:960.5px;top:153.4px;width:52px;text-align:right;font-size:14.5px;color:#e0e0e0">0,55</div>
<div class="t" style="left:1574.9px;top:620px;width:60px;text-align:center;font-size:14.5px;color:#e0e0e0">0,55</div>
<svg class="a" style="left:1453px;top:437px" width="200" height="133">
<defs>
<linearGradient id="insA" x1="0" y1="0" x2="1" y2="1"><stop offset="0" stop-color="#c0ff00"/><stop offset="0.45" stop-color="#ffff00"/><stop offset="1" stop-color="#ffb800"/></linearGradient>
<linearGradient id="insB" x1="0" y1="0" x2="1" y2="1"><stop offset="0" stop-color="#689600"/><stop offset="0.5" stop-color="#989800"/><stop offset="1" stop-color="#906800"/></linearGradient>
</defs>
<rect x="1" y="1" width="198" height="131" fill="url(#insA)"/>
<path d="M1 1 L199 1 L199 116.5 L1 15.5 Z" fill="url(#insB)"/>
<rect x="1" y="1" width="198" height="131" fill="none" stroke="#9a9a80" stroke-width="2"/>
<rect x="91.5" y="58.5" width="13" height="13" fill="none" stroke="#f4f4f4" stroke-width="1.6"/>
<circle cx="109" cy="72" r="5" fill="#ffff00" stroke="#202020" stroke-width="1.4"/>
</svg>
<div class="a" style="left:1403px;top:578px;width:253px;height:27px;background:#333333"></div>
<div class="t" style="left:1403.00px;top:582.54px;font-size:19.60px;color:#f0f0f0;transform:scaleX(1.0154);transform-origin:0 0;">RGB Triplet: 255, 255, 0</div>
<div class="a" style="left:0;top:37px;width:2px;height:968px;background:#262626"></div>
<div class="a" style="left:1663.5px;top:37px;width:5.5px;height:968px;background:linear-gradient(90deg,rgba(0,0,0,0),rgba(0,0,0,0.62))"></div>
</div></body></html>
